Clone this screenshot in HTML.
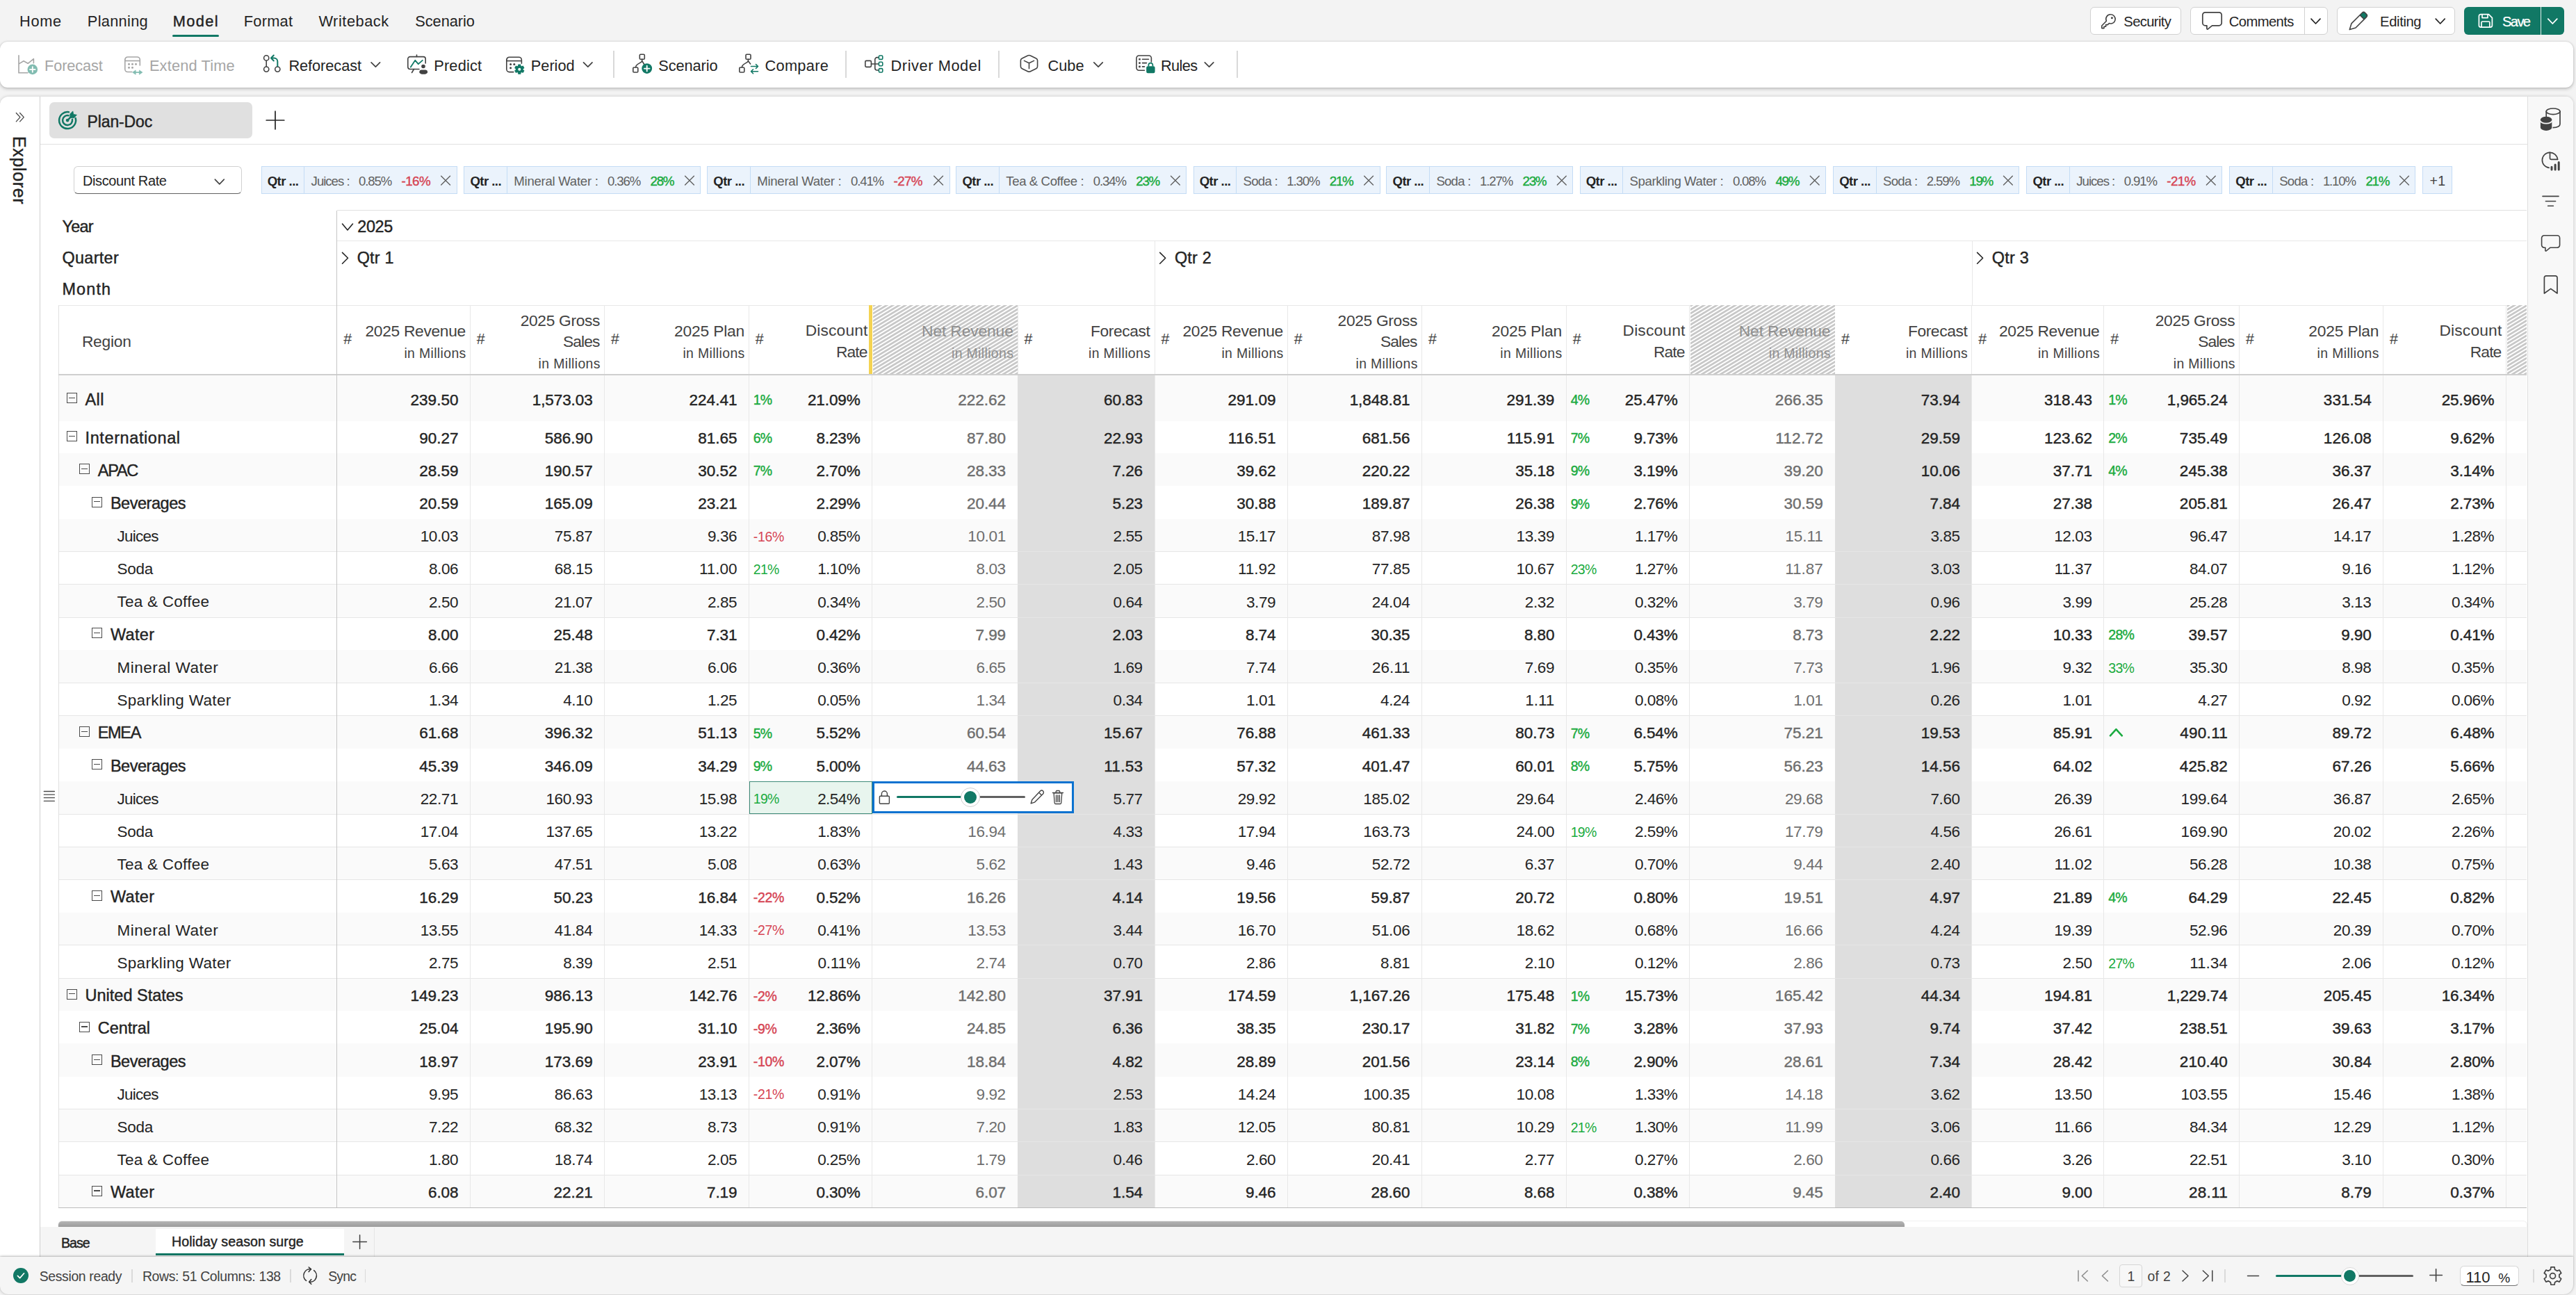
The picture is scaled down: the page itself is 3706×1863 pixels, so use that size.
<!DOCTYPE html><html><head><meta charset="utf-8"><title>Plan-Doc</title><style>

*{box-sizing:border-box;margin:0;padding:0}
html,body{width:3706px;height:1863px;overflow:hidden}
body{background:#f3f3f3;font-family:"Liberation Sans",sans-serif;color:#242424;position:relative}
.a{position:absolute}
.t{position:absolute;white-space:nowrap;line-height:1}
.sb{-webkit-text-stroke:0.42px currentColor}
svg{position:absolute;overflow:visible}
.nav{font-size:22.5px;top:20px;color:#242424}
.rib{font-size:24px;top:81px;color:#242424}
.rib.dis{color:#a3a3a3}
.btn{position:absolute;top:10px;height:40px;border:1px solid #d1d1d1;border-radius:6px;background:#fff}
.bt{position:absolute;white-space:nowrap;line-height:1;font-size:21px;top:19px;color:#242424}
.chip{position:absolute;top:239px;height:40px;background:#ebf3fc;border:1px solid #c2dcf7}
.chip i{position:absolute;top:0;bottom:0;left:61px;width:1px;background:#c2dcf7}
.ct{position:absolute;white-space:nowrap;line-height:1;font-size:19px;top:10px;color:#616161}
.ct.q{color:#242424;font-weight:bold;left:11px}
.ct.p{font-weight:bold}
.hl{position:absolute;height:1px;background:#e6e6e6}
.vl{position:absolute;width:1px;background:#e6e6e6}
.row{position:absolute;left:84px;width:3552px}
.c{position:absolute;white-space:nowrap;line-height:1;font-size:22.3px;text-align:right;color:#242424}
.c.g{color:#6e6e6e}
.d{position:absolute;white-space:nowrap;line-height:1;font-size:18.5px}
.lab{position:absolute;white-space:nowrap;line-height:1;font-size:22.3px;color:#242424}
.h1{position:absolute;white-space:nowrap;line-height:1;font-size:22.3px;color:#424242;text-align:right}
.h2{position:absolute;white-space:nowrap;line-height:1;font-size:19px;color:#424242;text-align:right}
.hash{position:absolute;white-space:nowrap;line-height:1;font-size:20px;color:#424242}
.pm{position:absolute;width:15px;height:15px;border:1.3px solid #4a4a4a}
.pm:after{content:"";position:absolute;left:2px;right:2px;top:5.5px;height:1.3px;background:#4a4a4a}

</style></head><body>
<div class="t" style="top:20.4px;font-size:21.8px;letter-spacing:0.69px;left:28.0px;">Home</div>
<div class="t" style="top:20.4px;font-size:21.8px;letter-spacing:0.29px;left:125.8px;">Planning</div>
<div class="t sb" style="top:20.4px;font-size:21.8px;letter-spacing:1.38px;left:248.7px;">Model</div>
<div class="t" style="top:20.4px;font-size:21.8px;letter-spacing:0.23px;left:350.8px;">Format</div>
<div class="t" style="top:20.4px;font-size:21.8px;letter-spacing:0.54px;left:458.4px;">Writeback</div>
<div class="t" style="top:20.4px;font-size:21.8px;letter-spacing:-0.07px;left:597.3px;">Scenario</div>
<div class="a" style="left:248px;top:50px;width:67px;height:3px;border-radius:2px;background:#117865"></div>
<div class="a" style="left:0;top:60px;width:3702.2px;height:65.8px;background:#fff;border-radius:11px;box-shadow:0 2px 5px rgba(0,0,0,.21),0 0 3px rgba(0,0,0,.13)"></div>
<div class="t" style="top:84.0px;font-size:21.8px;letter-spacing:-0.16px;left:64.1px;color:#a6a6a6;">Forecast</div>
<div class="t" style="top:84.0px;font-size:21.8px;letter-spacing:0.17px;left:214.9px;color:#a6a6a6;">Extend Time</div>
<div class="t" style="top:84.0px;font-size:21.8px;letter-spacing:-0.08px;left:415.4px;">Reforecast</div>
<div class="t" style="top:84.0px;font-size:21.8px;letter-spacing:0.18px;left:624.2px;">Predict</div>
<div class="t" style="top:84.0px;font-size:21.8px;letter-spacing:-0.04px;left:763.8px;">Period</div>
<div class="t" style="top:84.0px;font-size:21.8px;letter-spacing:-0.11px;left:947.3px;">Scenario</div>
<div class="t" style="top:84.0px;font-size:21.8px;letter-spacing:0.32px;left:1100.4px;">Compare</div>
<div class="t" style="top:84.0px;font-size:21.8px;letter-spacing:0.57px;left:1281.5px;">Driver Model</div>
<div class="t" style="top:84.0px;font-size:21.8px;letter-spacing:-0.05px;left:1507.6px;">Cube</div>
<div class="t" style="top:84.0px;font-size:21.8px;letter-spacing:-0.65px;left:1670.0px;">Rules</div>
<svg style="left:0;top:0" width="1" height="1"><path d="M534.1,89.8 L540.4,96.2 L546.6,89.8" fill="none" stroke="#424242" stroke-width="1.7" stroke-linecap="round" stroke-linejoin="round"/></svg>
<svg style="left:0;top:0" width="1" height="1"><path d="M839.5,89.8 L845.8,96.2 L852.0,89.8" fill="none" stroke="#424242" stroke-width="1.7" stroke-linecap="round" stroke-linejoin="round"/></svg>
<svg style="left:0;top:0" width="1" height="1"><path d="M1573.8,89.8 L1580.1,96.2 L1586.3,89.8" fill="none" stroke="#424242" stroke-width="1.7" stroke-linecap="round" stroke-linejoin="round"/></svg>
<svg style="left:0;top:0" width="1" height="1"><path d="M1733.3,89.8 L1739.6,96.2 L1745.8,89.8" fill="none" stroke="#424242" stroke-width="1.7" stroke-linecap="round" stroke-linejoin="round"/></svg>
<div class="a" style="left:882.2px;top:73px;width:1.6px;height:39px;background:#d9d9d9"></div>
<div class="a" style="left:1216.2px;top:73px;width:1.6px;height:39px;background:#d9d9d9"></div>
<div class="a" style="left:1436.2px;top:73px;width:1.6px;height:39px;background:#d9d9d9"></div>
<div class="a" style="left:1779.2px;top:73px;width:1.6px;height:39px;background:#d9d9d9"></div>
<svg style="left:25px;top:78px" width="31" height="30" viewBox="0 0 31 30"><path d="M2,1.7 V26.8 H15" fill="none" stroke="#a6a6a6" stroke-width="1.6" stroke-linecap="round"/><path d="M2.6,13.6 L9,9.8 L15.2,13.3 L23.4,6.7 V12.8" fill="none" stroke="#a6a6a6" stroke-width="1.6" stroke-linejoin="round" stroke-linecap="round"/><circle cx="21.8" cy="21.9" r="7.3" fill="#82bcb1"/><path d="M21.8,18.1 v7.6 M18,21.9 h7.6" stroke="#fff" stroke-width="1.8" stroke-linecap="round"/></svg>
<svg style="left:178px;top:80px" width="28" height="28" viewBox="0 0 28 28"><path d="M1.8,6 a4,4 0 0 1 4,-4 h13.5 a4,4 0 0 1 4,4 v8" fill="none" stroke="#a6a6a6" stroke-width="1.6" stroke-linecap="round"/><path d="M1.8,6 v13.5 a4,4 0 0 0 4,4 h6" fill="none" stroke="#a6a6a6" stroke-width="1.6" stroke-linecap="round"/><path d="M1.8,7.5 h21.5" stroke="#a6a6a6" stroke-width="1.6"/><g fill="#a6a6a6"><circle cx="7.5" cy="12.3" r="1.5"/><circle cx="12.5" cy="12.3" r="1.5"/><circle cx="17.5" cy="12.3" r="1.5"/><circle cx="7.5" cy="17.3" r="1.5"/><circle cx="12.5" cy="17.3" r="1.5"/></g><path d="M15,24.1 H25" stroke="#82bcb1" stroke-width="1.7"/><path d="M12.6,24.1 L17.2,20.9 V27.3 Z M27,24.1 L22.4,20.9 V27.3 Z" fill="#82bcb1" stroke="#82bcb1" stroke-width="0.6" stroke-linejoin="round"/></svg>
<svg style="left:378px;top:78px" width="28" height="28" viewBox="0 0 28 28"><circle cx="5.2" cy="5.4" r="3.6" fill="none" stroke="#424242" stroke-width="1.6"/><circle cx="5.2" cy="21.6" r="3.6" fill="none" stroke="#424242" stroke-width="1.6"/><circle cx="21.3" cy="21.6" r="3.6" fill="none" stroke="#424242" stroke-width="1.6"/><path d="M5.2,9 V18" stroke="#424242" stroke-width="1.6"/><path d="M21.3,18 V10.5 a5,5 0 0 0 -5,-5 H12.5" fill="none" stroke="#117865" stroke-width="2"/><path d="M15.8,1.5 L12,5.5 L15.8,9.5" fill="none" stroke="#117865" stroke-width="2" stroke-linecap="round" stroke-linejoin="round"/></svg>
<svg style="left:585px;top:78px" width="31" height="30" viewBox="0 0 31 30"><path d="M14.5,1 V3.5" stroke="#424242" stroke-width="1.6" stroke-linecap="round"/><path d="M18,21.5 H5 a3.2,3.2 0 0 1 -3.2,-3.2 V6.8 a3.2,3.2 0 0 1 3.2,-3.2 H24 a3.2,3.2 0 0 1 3.2,3.2 V13" fill="none" stroke="#424242" stroke-width="1.6" stroke-linecap="round"/><path d="M10.5,21.5 L7.5,26.5" stroke="#424242" stroke-width="1.6" stroke-linecap="round"/><path d="M5.8,18.6 L12.3,8.8 L16.8,14.2 L22.8,8.8" fill="none" stroke="#117865" stroke-width="1.8" stroke-linecap="round" stroke-linejoin="round"/><circle cx="24" cy="17.5" r="3.4" fill="#424242" stroke="#fff" stroke-width="1.2"/><path d="M18.2,25.2 a3,3 0 0 1 3,-2.6 h6 a3,3 0 0 1 3,2.6 c0,2.8 -3,3.6 -6,3.6 s-6,-0.8 -6,-3.6 z" fill="#424242"/></svg>
<svg style="left:727px;top:80px" width="29" height="28" viewBox="0 0 29 28"><path d="M1.8,6.2 a4,4 0 0 1 4,-4 h13.6 a4,4 0 0 1 4,4 v5" fill="none" stroke="#424242" stroke-width="1.6" stroke-linecap="round"/><path d="M1.8,6.2 v13.4 a4,4 0 0 0 4,4 h6" fill="none" stroke="#424242" stroke-width="1.6" stroke-linecap="round"/><path d="M1.8,7.6 h21.6" stroke="#424242" stroke-width="1.6"/><g fill="#424242"><circle cx="7.6" cy="12.6" r="1.5"/><circle cx="12.8" cy="12.6" r="1.5"/><circle cx="7.6" cy="17.8" r="1.5"/></g><g transform="translate(20.3,19.7) scale(0.93)"><path d="M1.73,5.01 L1.64,7.11 L-1.64,7.11 L-1.73,5.01 L-3.48,4.00 L-5.34,4.98 L-6.98,2.13 L-5.20,1.01 L-5.20,-1.01 L-6.98,-2.13 L-5.34,-4.98 L-3.48,-4.00 L-1.73,-5.01 L-1.64,-7.11 L1.64,-7.11 L1.73,-5.01 L3.48,-4.00 L5.34,-4.98 L6.98,-2.13 L5.20,-1.01 L5.20,1.01 L6.98,2.13 L5.34,4.98 L3.48,4.00 Z" fill="#117865" stroke="#117865" stroke-width="1.2" stroke-linejoin="round"/><circle r="2.2" fill="#fff"/></g></svg>
<svg style="left:909px;top:76px" width="31" height="32" viewBox="0 0 31 32"><rect x="11.3" y="2.3" width="7" height="7" rx="1.3" fill="none" stroke="#424242" stroke-width="1.6"/><rect x="1.8" y="21" width="7" height="7" rx="1.3" fill="none" stroke="#424242" stroke-width="1.6"/><path d="M14.7,9.4 V11.2 C14.7,15.2 6,14.6 5.6,20.6 M14.7,11.6 L17.6,16.2" fill="none" stroke="#424242" stroke-width="1.6" stroke-linecap="round"/><circle cx="21.7" cy="22.6" r="7.4" fill="#117865"/><path d="M21.7,18.8 v7.6 M17.9,22.6 h7.6" stroke="#fff" stroke-width="1.9" stroke-linecap="round"/></svg>
<svg style="left:1062px;top:76px" width="31" height="32" viewBox="0 0 31 32"><rect x="11" y="2.3" width="7" height="7" rx="1.3" fill="none" stroke="#424242" stroke-width="1.6"/><rect x="1.8" y="21" width="7" height="7" rx="1.3" fill="none" stroke="#424242" stroke-width="1.6"/><path d="M14.4,9.4 V11.2 C14.4,15.2 5.8,14.6 5.4,20.6 M14.4,11.6 L17.6,16" fill="none" stroke="#424242" stroke-width="1.6" stroke-linecap="round"/><path d="M18.5,19.5 H28.5 M25.5,16.5 l3,3 l-3,3" fill="none" stroke="#117865" stroke-width="1.6" stroke-linecap="round" stroke-linejoin="round"/><path d="M28.5,26.8 H18.5 M21.5,23.8 l-3,3 l3,3" fill="none" stroke="#117865" stroke-width="1.6" stroke-linecap="round" stroke-linejoin="round"/></svg>
<svg style="left:1243px;top:78px" width="30" height="29" viewBox="0 0 30 29"><rect x="1.8" y="9.4" width="8.6" height="9" rx="1.6" fill="none" stroke="#424242" stroke-width="1.6"/><path d="M10.4,14 H21 M21.5,4.6 H18.8 a3,3 0 0 0 -3,3 V20 a3,3 0 0 0 3,3 H21.5" fill="none" stroke="#424242" stroke-width="1.6"/><rect x="21.4" y="2" width="5.4" height="5.4" rx="1.4" fill="none" stroke="#117865" stroke-width="1.6"/><rect x="21.4" y="11.3" width="5.4" height="5.4" rx="1.4" fill="none" stroke="#117865" stroke-width="1.6"/><rect x="21.4" y="20.6" width="5.4" height="5.4" rx="1.4" fill="none" stroke="#117865" stroke-width="1.6"/></svg>
<svg style="left:1466px;top:78px" width="30" height="28" viewBox="0 0 30 28"><path d="M12.6,2 a4,4 0 0 1 3.8,0 l8.2,4 a3.4,3.4 0 0 1 2,3.1 V17.6 a3.4,3.4 0 0 1 -2,3.1 l-8.2,4 a4,4 0 0 1 -3.8,0 l-8.2,-4 a3.4,3.4 0 0 1 -2,-3.1 V9.1 a3.4,3.4 0 0 1 2,-3.1 z" fill="none" stroke="#424242" stroke-width="1.6" stroke-linejoin="round"/><path d="M7.5,9.4 L14.5,12.8 L21.5,9.4 M14.5,12.8 V20.6" fill="none" stroke="#424242" stroke-width="1.6" stroke-linecap="round" stroke-linejoin="round"/></svg>
<svg style="left:1633px;top:78px" width="30" height="29" viewBox="0 0 30 29"><path d="M13.5,23.2 H5.6 a3.6,3.6 0 0 1 -3.6,-3.6 V5.6 a3.6,3.6 0 0 1 3.6,-3.6 H19.8 a3.6,3.6 0 0 1 3.6,3.6 V11" fill="none" stroke="#424242" stroke-width="1.6" stroke-linecap="round"/><g fill="#424242"><rect x="5.2" y="6" width="2.6" height="2.6" rx=".6"/><rect x="5.2" y="11.3" width="2.6" height="2.6" rx=".6"/><rect x="5.2" y="16.6" width="2.6" height="2.6" rx=".6"/></g><path d="M10.5,7.3 H19.5 M10.5,12.6 H16.5 M10.5,17.9 H13.5" stroke="#424242" stroke-width="1.6" stroke-linecap="round"/><rect x="16.2" y="17.2" width="12.4" height="10" rx="2.2" fill="#117865"/><path d="M19.4,17.6 V15.6 a3,3 0 0 1 6,0 V17.6" fill="none" stroke="#117865" stroke-width="1.8"/></svg>
<div class="btn" style="left:3007px;width:131px"></div>
<div class="btn" style="left:3151px;width:198px"></div>
<div class="a" style="left:3315px;top:11px;width:1px;height:38px;background:#d1d1d1"></div>
<div class="btn" style="left:3362px;width:170px"></div>
<div class="a" style="left:3545px;top:10px;width:144px;height:40px;border-radius:6px;background:#117865"></div>
<div class="a" style="left:3654.6px;top:10px;width:1.3px;height:40px;background:rgba(255,255,255,.88)"></div>
<div class="t" style="top:20.7px;font-size:20.2px;letter-spacing:-0.61px;left:3055.3px;">Security</div>
<div class="t" style="top:20.7px;font-size:20.2px;letter-spacing:-0.57px;left:3206.8px;">Comments</div>
<div class="t" style="top:20.7px;font-size:20.2px;letter-spacing:-0.37px;left:3424.1px;">Editing</div>
<div class="t" style="top:20.7px;font-size:20.2px;letter-spacing:-1.64px;left:3600.0px;color:#fff;-webkit-text-stroke:0.25px #fff;">Save</div>
<svg style="left:0;top:0" width="1" height="1"><path d="M3325.0,27.2 L3331.5,34.0 L3338.0,27.2" fill="none" stroke="#242424" stroke-width="1.7" stroke-linecap="round" stroke-linejoin="round"/></svg>
<svg style="left:0;top:0" width="1" height="1"><path d="M3504.2,27.2 L3510.7,34.0 L3517.2,27.2" fill="none" stroke="#242424" stroke-width="1.7" stroke-linecap="round" stroke-linejoin="round"/></svg>
<svg style="left:0;top:0" width="1" height="1"><path d="M3665.8,27.2 L3672.3,34.0 L3678.8,27.2" fill="none" stroke="#fff" stroke-width="1.8" stroke-linecap="round" stroke-linejoin="round"/></svg>
<svg style="left:3022px;top:19px" width="25" height="24" viewBox="0 0 25 24"><path d="M14.6,1.8 a6.6,6.6 0 1 1 -2.3,12.8 L10.2,16.6 H7.6 V19.2 H5 V21.6 H1.8 V18 L8.4,11.2 A6.6,6.6 0 0 1 14.6,1.8 Z" fill="none" stroke="#424242" stroke-width="1.6" stroke-linejoin="round"/><circle cx="16.4" cy="6.8" r="1.5" fill="#424242"/></svg>
<svg style="left:3167px;top:16.2px" width="32" height="29" viewBox="0 0 32 29"><path d="M5.6,1.8 H25.4 a3.8,3.8 0 0 1 3.8,3.8 V17 a3.8,3.8 0 0 1 -3.8,3.8 H15.5 L9.4,25.8 a.9,.9 0 0 1 -1.5,-.7 V20.8 H5.6 a3.8,3.8 0 0 1 -3.8,-3.8 V5.6 a3.8,3.8 0 0 1 3.8,-3.8 Z" fill="none" stroke="#424242" stroke-width="1.7" stroke-linejoin="round"/></svg>
<svg style="left:0;top:0" width="1" height="1"><g transform="translate(3380.3,42.6) rotate(-45)"><path d="M25.299999999999997,-4.3 L29.799999999999997,-4.3 Q32.8,-4.3 32.8,-1.3 L32.8,1.3 Q32.8,4.3 29.799999999999997,4.3 L25.299999999999997,4.3 Z" fill="#117865"/><path d="M0,0 L8,-4.3 L29.799999999999997,-4.3 Q32.8,-4.3 32.8,-1.3 L32.8,1.3 Q32.8,4.3 29.799999999999997,4.3 L8,4.3 Z M25.299999999999997,-4.3 V4.3" fill="none" stroke="#424242" stroke-width="1.6" stroke-linejoin="round"/></g></svg>
<svg style="left:3565px;top:19px" width="23" height="22" viewBox="0 0 23 22"><path d="M4,1.6 H15.4 L20.4,6.6 V17.6 a2.6,2.6 0 0 1 -2.6,2.6 H4 a2.6,2.6 0 0 1 -2.6,-2.6 V4.2 A2.6,2.6 0 0 1 4,1.6 Z" fill="none" stroke="#fff" stroke-width="1.7" stroke-linejoin="round"/><path d="M6,1.8 V6.6 H14 V1.8 M5,20 V13.2 a1.2,1.2 0 0 1 1.2,-1.2 H15.6 a1.2,1.2 0 0 1 1.2,1.2 V20" fill="none" stroke="#fff" stroke-width="1.7" stroke-linejoin="round"/></svg>
<div class="a" style="left:0;top:138.8px;width:3702.2px;height:1669.2px;background:#fff;border-radius:12px 11px 0 0;box-shadow:0 0 4px rgba(0,0,0,.19)"></div>
<div class="a" style="left:3636px;top:138.8px;width:66.2px;height:1669.2px;background:#f8f8f8;border-left:1px solid #dedede;border-radius:0 11px 0 0"></div>
<div class="a" style="left:57.2px;top:139px;width:1px;height:1669px;background:#cfcfcf"></div>
<svg style="left:0;top:0" width="1" height="1"><path d="M23.3,162.5 L29,168.7 L23.3,174.9 M28.6,162.5 L34.3,168.7 L28.6,174.9" fill="none" stroke="#424242" stroke-width="1.25" stroke-linecap="round" stroke-linejoin="round"/></svg>
<div class="t sb" style="left:27px;top:195.8px;font-size:25px;letter-spacing:0.65px;transform-origin:0 0;transform:rotate(90deg) translate(0,-50%);color:#242424">Explorer</div>
<svg style="left:0;top:0" width="1" height="1"><path d="M63.3,1138.5 H78.4 M63.3,1143.2 H78.4 M63.3,1147.7 H78.4 M63.3,1152.3 H78.4" stroke="#4a4a4a" stroke-width="1.3" stroke-linecap="round"/></svg>
<svg style="left:0;top:0" width="1" height="1"><ellipse cx="3673.1" cy="160.3" rx="9.9" ry="4.3" fill="none" stroke="#424242" stroke-width="1.7"/><path d="M3663.2,160.3 V168 M3683,160.3 V178.6 C3683,181.6 3678.6,183.6 3672.4,183.7" fill="none" stroke="#424242" stroke-width="1.7" stroke-linecap="round"/><path d="M3654.9,172.3 V183.5 a8.2,4.4 0 0 0 16.4,0 V172.3 Z" fill="#424242" stroke="#f8f8f8" stroke-width="2.6"/><path d="M3654.9,172.3 V183.5 a8.2,4.4 0 0 0 16.4,0 V172.3 Z" fill="#424242"/><ellipse cx="3663.1" cy="173.7" rx="9" ry="4.9" fill="#f8f8f8"/><ellipse cx="3663.1" cy="172.3" rx="8.2" ry="4.5" fill="#424242"/></svg>
<svg style="left:0;top:0" width="1" height="1"><path d="M3667.15,241.42 A11.1,11.1 0 1 1 3679.54,229.24" fill="none" stroke="#424242" stroke-width="1.7" stroke-linecap="round"/><path d="M3668.5,219.4 V227.8 a1.6,1.6 0 0 0 1.6,1.6 H3679.4" fill="none" stroke="#424242" stroke-width="1.7" stroke-linecap="round"/><path d="M3671,240.3 V243.9 M3676.1,236.9 V243.9 M3681.2,233.5 V243.9" stroke="#424242" stroke-width="3" stroke-linecap="round"/></svg>
<svg style="left:3656px;top:280px" width="28" height="18" viewBox="0 0 28 18"><path d="M2,2.4 H25 M6.4,9.5 H20.6 M9.6,16.2 H17.4" stroke="#424242" stroke-width="1.6" stroke-linecap="round"/></svg>
<svg style="left:3655px;top:337px" width="30" height="27" viewBox="0 0 30 27"><path d="M5.2,1.8 H24 a3.6,3.6 0 0 1 3.6,3.6 V15.6 a3.6,3.6 0 0 1 -3.6,3.6 H14 L8.2,24 a.8,.8 0 0 1 -1.3,-.6 V19.2 H5.2 a3.6,3.6 0 0 1 -3.6,-3.6 V5.4 a3.6,3.6 0 0 1 3.6,-3.6 Z" fill="none" stroke="#424242" stroke-width="1.6" stroke-linejoin="round"/></svg>
<svg style="left:3658px;top:395px" width="24" height="30" viewBox="0 0 24 30"><path d="M2.4,4.4 a2.6,2.6 0 0 1 2.6,-2.6 H18.4 a2.6,2.6 0 0 1 2.6,2.6 V27 L11.7,20.4 L2.4,27 Z" fill="none" stroke="#424242" stroke-width="1.7" stroke-linejoin="round"/></svg>
<div class="a" style="left:71px;top:147px;width:291.5px;height:52px;background:#e0e0e0;border-radius:7px"></div>
<svg style="left:83px;top:159px" width="29" height="29" viewBox="0 0 29 29"><path d="M15.98,2.25 A12,12 0 1 0 25.71,11.08" fill="none" stroke="#117865" stroke-width="2.5" stroke-linecap="round"/><path d="M15.56,7.25 A7,7 0 1 0 20.99,12.88" fill="none" stroke="#117865" stroke-width="2.5" stroke-linecap="round"/><circle cx="14.1" cy="14.1" r="2.4" fill="#117865"/><path d="M14.1,14.1 L20,8.2" stroke="#117865" stroke-width="2.5" stroke-linecap="round"/><path d="M21.8,0.9 L22.7,5.5 L27.4,6.3 L23.4,10.6 H19 L17.8,9.2 V4.9 Z" fill="#117865" stroke="#117865" stroke-width="0.8" stroke-linejoin="round"/></svg>
<div class="t sb" style="top:163.5px;font-size:23px;letter-spacing:-0.12px;left:125.5px;">Plan-Doc</div>
<svg style="left:382px;top:159px" width="28" height="28" viewBox="0 0 28 28"><path d="M14,1.2 V26.8 M1.2,14 H26.8" stroke="#242424" stroke-width="1.7" stroke-linecap="round"/></svg>
<div class="hl" style="left:58px;top:207px;width:3578px;background:#e0e0e0"></div>
<div class="a" style="left:106px;top:239.2px;width:241.5px;height:39.8px;border:1px solid #d1d1d1;border-bottom:1.6px solid #616161;border-radius:6px;background:#fff"></div>
<div class="t" style="top:249.9px;font-size:20px;letter-spacing:-0.39px;left:119.0px;color:#242424;">Discount Rate</div>
<svg style="left:0;top:0" width="1" height="1"><path d="M309.3,258.1 L315.8,264.9 L322.3,258.1" fill="none" stroke="#424242" stroke-width="1.6" stroke-linecap="round" stroke-linejoin="round"/></svg>
<div class="a" style="left:375.5px;top:239px;width:282.1px;height:40px;background:#ebf3fc;border:1px solid #c4dcf5"></div>
<div class="a" style="left:437.3px;top:240px;width:1px;height:38px;background:#c4dcf5"></div>
<div class="t" style="top:251.9px;font-size:18.6px;letter-spacing:-0.55px;left:384.7px;color:#242424;font-weight:bold;">Qtr ...</div>
<div class="t" style="top:251.9px;font-size:18.6px;letter-spacing:-1.01px;left:447.6px;color:#616161;">Juices :</div>
<div class="t" style="top:251.9px;font-size:18.6px;letter-spacing:-1.15px;left:516.1px;color:#616161;">0.85%</div>
<div class="t sb" style="top:251.7px;font-size:18.8px;letter-spacing:-0.62px;left:577.6px;color:#d64554;">-16%</div>
<svg style="left:0;top:0" width="1" height="1"><path d="M634.7,253.3 L647.5,266.1 M647.5,253.3 L634.7,266.1" stroke="#616161" stroke-width="1.4" stroke-linecap="round"/></svg>
<div class="a" style="left:667.2px;top:239px;width:341.3px;height:40px;background:#ebf3fc;border:1px solid #c4dcf5"></div>
<div class="a" style="left:729.0px;top:240px;width:1px;height:38px;background:#c4dcf5"></div>
<div class="t" style="top:251.9px;font-size:18.6px;letter-spacing:-0.55px;left:676.4px;color:#242424;font-weight:bold;">Qtr ...</div>
<div class="t" style="top:251.9px;font-size:18.6px;letter-spacing:-0.27px;left:739.3px;color:#616161;">Mineral Water :</div>
<div class="t" style="top:251.9px;font-size:18.6px;letter-spacing:-1.15px;left:874.1px;color:#616161;">0.36%</div>
<div class="t sb" style="top:251.7px;font-size:18.8px;letter-spacing:-1.31px;left:935.6px;color:#1aab40;">28%</div>
<svg style="left:0;top:0" width="1" height="1"><path d="M985.6,253.3 L998.4,266.1 M998.4,253.3 L985.6,266.1" stroke="#616161" stroke-width="1.4" stroke-linecap="round"/></svg>
<div class="a" style="left:1017.1px;top:239px;width:349.5px;height:40px;background:#ebf3fc;border:1px solid #c4dcf5"></div>
<div class="a" style="left:1078.9px;top:240px;width:1px;height:38px;background:#c4dcf5"></div>
<div class="t" style="top:251.9px;font-size:18.6px;letter-spacing:-0.55px;left:1026.3px;color:#242424;font-weight:bold;">Qtr ...</div>
<div class="t" style="top:251.9px;font-size:18.6px;letter-spacing:-0.27px;left:1089.2px;color:#616161;">Mineral Water :</div>
<div class="t" style="top:251.9px;font-size:18.6px;letter-spacing:-1.15px;left:1224.0px;color:#616161;">0.41%</div>
<div class="t sb" style="top:251.7px;font-size:18.8px;letter-spacing:-0.62px;left:1285.5px;color:#d64554;">-27%</div>
<svg style="left:0;top:0" width="1" height="1"><path d="M1343.7,253.3 L1356.5,266.1 M1356.5,253.3 L1343.7,266.1" stroke="#616161" stroke-width="1.4" stroke-linecap="round"/></svg>
<div class="a" style="left:1375.2px;top:239px;width:332.2px;height:40px;background:#ebf3fc;border:1px solid #c4dcf5"></div>
<div class="a" style="left:1437.0px;top:240px;width:1px;height:38px;background:#c4dcf5"></div>
<div class="t" style="top:251.9px;font-size:18.6px;letter-spacing:-0.55px;left:1384.4px;color:#242424;font-weight:bold;">Qtr ...</div>
<div class="t" style="top:251.9px;font-size:18.6px;letter-spacing:-0.40px;left:1447.3px;color:#616161;">Tea &amp; Coffee :</div>
<div class="t" style="top:251.9px;font-size:18.6px;letter-spacing:-1.15px;left:1572.8px;color:#616161;">0.34%</div>
<div class="t sb" style="top:251.7px;font-size:18.8px;letter-spacing:-1.31px;left:1634.3px;color:#1aab40;">23%</div>
<svg style="left:0;top:0" width="1" height="1"><path d="M1684.5,253.3 L1697.3,266.1 M1697.3,253.3 L1684.5,266.1" stroke="#616161" stroke-width="1.4" stroke-linecap="round"/></svg>
<div class="a" style="left:1716.5px;top:239px;width:269.1px;height:40px;background:#ebf3fc;border:1px solid #c4dcf5"></div>
<div class="a" style="left:1778.3px;top:240px;width:1px;height:38px;background:#c4dcf5"></div>
<div class="t" style="top:251.9px;font-size:18.6px;letter-spacing:-0.55px;left:1725.7px;color:#242424;font-weight:bold;">Qtr ...</div>
<div class="t" style="top:251.9px;font-size:18.6px;letter-spacing:-0.76px;left:1788.6px;color:#616161;">Soda :</div>
<div class="t" style="top:251.9px;font-size:18.6px;letter-spacing:-1.15px;left:1851.3px;color:#616161;">1.30%</div>
<div class="t sb" style="top:251.7px;font-size:18.8px;letter-spacing:-1.31px;left:1912.8px;color:#1aab40;">21%</div>
<svg style="left:0;top:0" width="1" height="1"><path d="M1962.7,253.3 L1975.5,266.1 M1975.5,253.3 L1962.7,266.1" stroke="#616161" stroke-width="1.4" stroke-linecap="round"/></svg>
<div class="a" style="left:1994.3px;top:239px;width:269.0px;height:40px;background:#ebf3fc;border:1px solid #c4dcf5"></div>
<div class="a" style="left:2056.1px;top:240px;width:1px;height:38px;background:#c4dcf5"></div>
<div class="t" style="top:251.9px;font-size:18.6px;letter-spacing:-0.55px;left:2003.5px;color:#242424;font-weight:bold;">Qtr ...</div>
<div class="t" style="top:251.9px;font-size:18.6px;letter-spacing:-0.76px;left:2066.4px;color:#616161;">Soda :</div>
<div class="t" style="top:251.9px;font-size:18.6px;letter-spacing:-1.15px;left:2129.1px;color:#616161;">1.27%</div>
<div class="t sb" style="top:251.7px;font-size:18.8px;letter-spacing:-1.31px;left:2190.6px;color:#1aab40;">23%</div>
<svg style="left:0;top:0" width="1" height="1"><path d="M2240.4,253.3 L2253.2,266.1 M2253.2,253.3 L2240.4,266.1" stroke="#616161" stroke-width="1.4" stroke-linecap="round"/></svg>
<div class="a" style="left:2272.5px;top:239px;width:354.7px;height:40px;background:#ebf3fc;border:1px solid #c4dcf5"></div>
<div class="a" style="left:2334.3px;top:240px;width:1px;height:38px;background:#c4dcf5"></div>
<div class="t" style="top:251.9px;font-size:18.6px;letter-spacing:-0.55px;left:2281.7px;color:#242424;font-weight:bold;">Qtr ...</div>
<div class="t" style="top:251.9px;font-size:18.6px;letter-spacing:-0.42px;left:2344.6px;color:#616161;">Sparkling Water :</div>
<div class="t" style="top:251.9px;font-size:18.6px;letter-spacing:-1.15px;left:2492.9px;color:#616161;">0.08%</div>
<div class="t sb" style="top:251.7px;font-size:18.8px;letter-spacing:-1.31px;left:2554.4px;color:#1aab40;">49%</div>
<svg style="left:0;top:0" width="1" height="1"><path d="M2604.3,253.3 L2617.1,266.1 M2617.1,253.3 L2604.3,266.1" stroke="#616161" stroke-width="1.4" stroke-linecap="round"/></svg>
<div class="a" style="left:2637px;top:239px;width:268.4px;height:40px;background:#ebf3fc;border:1px solid #c4dcf5"></div>
<div class="a" style="left:2698.8px;top:240px;width:1px;height:38px;background:#c4dcf5"></div>
<div class="t" style="top:251.9px;font-size:18.6px;letter-spacing:-0.55px;left:2646.2px;color:#242424;font-weight:bold;">Qtr ...</div>
<div class="t" style="top:251.9px;font-size:18.6px;letter-spacing:-0.76px;left:2709.1px;color:#616161;">Soda :</div>
<div class="t" style="top:251.9px;font-size:18.6px;letter-spacing:-1.15px;left:2771.8px;color:#616161;">2.59%</div>
<div class="t sb" style="top:251.7px;font-size:18.8px;letter-spacing:-1.31px;left:2833.3px;color:#1aab40;">19%</div>
<svg style="left:0;top:0" width="1" height="1"><path d="M2882.5,253.3 L2895.3,266.1 M2895.3,253.3 L2882.5,266.1" stroke="#616161" stroke-width="1.4" stroke-linecap="round"/></svg>
<div class="a" style="left:2915.2px;top:239px;width:282.1px;height:40px;background:#ebf3fc;border:1px solid #c4dcf5"></div>
<div class="a" style="left:2977.0px;top:240px;width:1px;height:38px;background:#c4dcf5"></div>
<div class="t" style="top:251.9px;font-size:18.6px;letter-spacing:-0.55px;left:2924.4px;color:#242424;font-weight:bold;">Qtr ...</div>
<div class="t" style="top:251.9px;font-size:18.6px;letter-spacing:-1.01px;left:2987.3px;color:#616161;">Juices :</div>
<div class="t" style="top:251.9px;font-size:18.6px;letter-spacing:-1.15px;left:3055.8px;color:#616161;">0.91%</div>
<div class="t sb" style="top:251.7px;font-size:18.8px;letter-spacing:-0.62px;left:3117.3px;color:#d64554;">-21%</div>
<svg style="left:0;top:0" width="1" height="1"><path d="M3174.4,253.3 L3187.2,266.1 M3187.2,253.3 L3174.4,266.1" stroke="#616161" stroke-width="1.4" stroke-linecap="round"/></svg>
<div class="a" style="left:3207.1px;top:239px;width:268.4px;height:40px;background:#ebf3fc;border:1px solid #c4dcf5"></div>
<div class="a" style="left:3268.9px;top:240px;width:1px;height:38px;background:#c4dcf5"></div>
<div class="t" style="top:251.9px;font-size:18.6px;letter-spacing:-0.55px;left:3216.3px;color:#242424;font-weight:bold;">Qtr ...</div>
<div class="t" style="top:251.9px;font-size:18.6px;letter-spacing:-0.76px;left:3279.2px;color:#616161;">Soda :</div>
<div class="t" style="top:251.9px;font-size:18.6px;letter-spacing:-1.15px;left:3341.9px;color:#616161;">1.10%</div>
<div class="t sb" style="top:251.7px;font-size:18.8px;letter-spacing:-1.31px;left:3403.4px;color:#1aab40;">21%</div>
<svg style="left:0;top:0" width="1" height="1"><path d="M3452.6,253.3 L3465.4,266.1 M3465.4,253.3 L3452.6,266.1" stroke="#616161" stroke-width="1.4" stroke-linecap="round"/></svg>
<div class="a" style="left:3485.3px;top:239px;width:42.3px;height:40px;background:#ebf3fc;border:1px solid #c4dcf5"></div>
<div class="t" style="top:251.1px;font-size:19.5px;letter-spacing:0.38px;left:3495.5px;color:#424242;">+1</div>
<div class="t sb" style="top:314.5px;font-size:23.4px;letter-spacing:-0.77px;left:89.5px;">Year</div>
<div class="t sb" style="top:359.7px;font-size:23.4px;letter-spacing:0.32px;left:89.5px;">Quarter</div>
<div class="t sb" style="top:405.4px;font-size:23.4px;letter-spacing:1.13px;left:89.5px;">Month</div>
<svg style="left:0;top:0" width="1" height="1"><path d="M492.5,322.0 L500.0,331.0 L507.5,322.0" fill="none" stroke="#242424" stroke-width="1.6" stroke-linecap="round" stroke-linejoin="round"/></svg>
<div class="t sb" style="top:314.5px;font-size:23.4px;letter-spacing:-0.31px;left:514.2px;">2025</div>
<svg style="left:0;top:0" width="1" height="1"><path d="M492.5,363.4 L500.5,371.3 L492.5,379.2" fill="none" stroke="#242424" stroke-width="1.6" stroke-linecap="round" stroke-linejoin="round"/></svg>
<div class="t sb" style="top:359.7px;font-size:23.4px;letter-spacing:0.22px;left:513.7px;">Qtr 1</div>
<svg style="left:0;top:0" width="1" height="1"><path d="M1668.7,363.4 L1676.7,371.3 L1668.7,379.2" fill="none" stroke="#242424" stroke-width="1.6" stroke-linecap="round" stroke-linejoin="round"/></svg>
<div class="t sb" style="top:359.7px;font-size:23.4px;letter-spacing:0.22px;left:1689.9px;">Qtr 2</div>
<svg style="left:0;top:0" width="1" height="1"><path d="M2844.6,363.4 L2852.6,371.3 L2844.6,379.2" fill="none" stroke="#242424" stroke-width="1.6" stroke-linecap="round" stroke-linejoin="round"/></svg>
<div class="t sb" style="top:359.7px;font-size:23.4px;letter-spacing:0.22px;left:2865.8px;">Qtr 3</div>
<div class="hl" style="left:484.9px;top:302px;width:3150.1px;background:#e0e0e0"></div>
<div class="hl" style="left:484.9px;top:346px;width:3150.1px;background:#e8e8e8"></div>
<div class="hl" style="left:84.0px;top:438.5px;width:3551.0px;background:#e8e8e8"></div>
<div class="vl" style="left:1660.6px;top:346px;height:93px;background:#e8e8e8"></div>
<div class="vl" style="left:2836.5px;top:346px;height:93px;background:#e8e8e8"></div>
<div class="a" style="left:84.0px;top:540px;width:3551.0px;height:66px;background:#fafafa"></div>
<div class="a" style="left:84.0px;top:652px;width:3551.0px;height:47px;background:#fafafa"></div>
<div class="a" style="left:84.0px;top:747px;width:3551.0px;height:47px;background:#fafafa"></div>
<div class="a" style="left:84.0px;top:841px;width:3551.0px;height:47px;background:#fafafa"></div>
<div class="a" style="left:84.0px;top:935px;width:3551.0px;height:47px;background:#fafafa"></div>
<div class="a" style="left:84.0px;top:1030px;width:3551.0px;height:47px;background:#fafafa"></div>
<div class="a" style="left:84.0px;top:1124px;width:3551.0px;height:47px;background:#fafafa"></div>
<div class="a" style="left:84.0px;top:1218px;width:3551.0px;height:48px;background:#fafafa"></div>
<div class="a" style="left:84.0px;top:1313px;width:3551.0px;height:47px;background:#fafafa"></div>
<div class="a" style="left:84.0px;top:1407px;width:3551.0px;height:47px;background:#fafafa"></div>
<div class="a" style="left:84.0px;top:1501px;width:3551.0px;height:48px;background:#fafafa"></div>
<div class="a" style="left:84.0px;top:1596px;width:3551.0px;height:47px;background:#fafafa"></div>
<div class="a" style="left:84.0px;top:1690px;width:3551.0px;height:47px;background:#fafafa"></div>
<div class="a" style="left:1464.1px;top:540.0px;width:197.0px;height:1197.2px;background:#dedede"></div>
<div class="a" style="left:2639.8px;top:540.0px;width:197.2px;height:1197.2px;background:#dedede"></div>
<div class="hl" style="left:84.0px;top:793px;width:3551.0px;height:1px;background:#e6e6e6"></div>
<div class="hl" style="left:84.0px;top:840px;width:3551.0px;height:1px;background:#e6e6e6"></div>
<div class="hl" style="left:84.0px;top:888px;width:3551.0px;height:1px;background:#e6e6e6"></div>
<div class="hl" style="left:84.0px;top:982px;width:3551.0px;height:1px;background:#e6e6e6"></div>
<div class="hl" style="left:84.0px;top:1029px;width:3551.0px;height:1px;background:#e6e6e6"></div>
<div class="hl" style="left:84.0px;top:1171px;width:3551.0px;height:1px;background:#e6e6e6"></div>
<div class="hl" style="left:84.0px;top:1218px;width:3551.0px;height:1px;background:#e6e6e6"></div>
<div class="hl" style="left:84.0px;top:1265px;width:3551.0px;height:1px;background:#e6e6e6"></div>
<div class="hl" style="left:84.0px;top:1359px;width:3551.0px;height:1px;background:#e6e6e6"></div>
<div class="hl" style="left:84.0px;top:1407px;width:3551.0px;height:1px;background:#e6e6e6"></div>
<div class="hl" style="left:84.0px;top:1595px;width:3551.0px;height:1px;background:#e6e6e6"></div>
<div class="hl" style="left:84.0px;top:1642px;width:3551.0px;height:1px;background:#e6e6e6"></div>
<div class="hl" style="left:84.0px;top:1690px;width:3551.0px;height:1px;background:#e6e6e6"></div>
<div class="vl" style="left:83.5px;top:439px;height:1298.2px;background:#e0e0e0"></div>
<div class="vl" style="left:676px;top:439px;height:1298.2px;background:#e8e8e8"></div>
<div class="vl" style="left:869px;top:439px;height:1298.2px;background:#e8e8e8"></div>
<div class="vl" style="left:1077px;top:439px;height:1298.2px;background:#e8e8e8"></div>
<div class="vl" style="left:1254px;top:439px;height:1298.2px;background:#e8e8e8"></div>
<div class="vl" style="left:1464px;top:439px;height:100px;background:#e8e8e8"></div>
<div class="vl" style="left:1661px;top:439px;height:1298.2px;background:#e8e8e8"></div>
<div class="vl" style="left:1852px;top:439px;height:1298.2px;background:#e8e8e8"></div>
<div class="vl" style="left:2045px;top:439px;height:1298.2px;background:#e8e8e8"></div>
<div class="vl" style="left:2253px;top:439px;height:1298.2px;background:#e8e8e8"></div>
<div class="vl" style="left:2430px;top:439px;height:1298.2px;background:#e8e8e8"></div>
<div class="vl" style="left:2639px;top:439px;height:100px;background:#e8e8e8"></div>
<div class="vl" style="left:2836px;top:439px;height:1298.2px;background:#e8e8e8"></div>
<div class="vl" style="left:3026px;top:439px;height:1298.2px;background:#e8e8e8"></div>
<div class="vl" style="left:3221px;top:439px;height:1298.2px;background:#e8e8e8"></div>
<div class="vl" style="left:3428px;top:439px;height:1298.2px;background:#e8e8e8"></div>
<div class="vl" style="left:3605px;top:439px;height:1298.2px;background:#e8e8e8"></div>
<div class="t" style="top:478.2px;font-size:21.4px;left:494.2px;color:#424242;">#</div>
<div class="t" style="top:464.5px;font-size:22.8px;letter-spacing:-0.32px;right:3036.1px;color:#424242;">2025 Revenue</div>
<div class="t" style="top:498.6px;font-size:19.4px;letter-spacing:0.37px;right:3035.4px;color:#424242;">in Millions</div>
<div class="t" style="top:478.2px;font-size:21.4px;left:685.8px;color:#424242;">#</div>
<div class="t" style="top:449.9px;font-size:22.8px;letter-spacing:-0.34px;right:2842.9px;color:#424242;">2025 Gross</div>
<div class="t" style="top:480.4px;font-size:22.8px;letter-spacing:-0.91px;right:2843.5px;color:#424242;">Sales</div>
<div class="t" style="top:513.8px;font-size:19.4px;letter-spacing:0.37px;right:2842.2px;color:#424242;">in Millions</div>
<div class="t" style="top:478.2px;font-size:21.4px;left:879.0px;color:#424242;">#</div>
<div class="t" style="top:464.5px;font-size:22.8px;letter-spacing:-0.19px;right:2635.0px;color:#424242;">2025 Plan</div>
<div class="t" style="top:498.6px;font-size:19.4px;letter-spacing:0.37px;right:2634.4px;color:#424242;">in Millions</div>
<div class="t" style="top:478.2px;font-size:21.4px;left:1086.8px;color:#424242;">#</div>
<div class="t" style="top:463.6px;font-size:22.8px;letter-spacing:0.16px;right:2457.4px;color:#424242;">Discount</div>
<div class="t" style="top:494.6px;font-size:22.8px;letter-spacing:-0.92px;right:2458.5px;color:#424242;">Rate</div>
<div class="a" style="left:1256.2px;top:439px;width:207.8px;height:99px;background:repeating-linear-gradient(149deg,#c8c8c8 0,#c8c8c8 1.95px,#fff 2.75px,#fff 3.85px,#c8c8c8 4.63px)"></div>
<div class="t" style="top:464.5px;font-size:22.8px;letter-spacing:-0.13px;right:2248.3px;color:#8f8f8f;">Net Revenue</div>
<div class="t" style="top:498.6px;font-size:19.4px;letter-spacing:0.37px;right:2247.8px;color:#8f8f8f;">in Millions</div>
<div class="t" style="top:478.2px;font-size:21.4px;left:1473.4px;color:#424242;">#</div>
<div class="t" style="top:464.5px;font-size:22.8px;letter-spacing:-0.41px;right:2051.6px;color:#424242;">Forecast</div>
<div class="t" style="top:498.6px;font-size:19.4px;letter-spacing:0.37px;right:2050.8px;color:#424242;">in Millions</div>
<div class="t" style="top:478.2px;font-size:21.4px;left:1670.4px;color:#424242;">#</div>
<div class="t" style="top:464.5px;font-size:22.8px;letter-spacing:-0.32px;right:1860.1px;color:#424242;">2025 Revenue</div>
<div class="t" style="top:498.6px;font-size:19.4px;letter-spacing:0.37px;right:1859.4px;color:#424242;">in Millions</div>
<div class="t" style="top:478.2px;font-size:21.4px;left:1861.8px;color:#424242;">#</div>
<div class="t" style="top:449.9px;font-size:22.8px;letter-spacing:-0.34px;right:1667.0px;color:#424242;">2025 Gross</div>
<div class="t" style="top:480.4px;font-size:22.8px;letter-spacing:-0.91px;right:1667.6px;color:#424242;">Sales</div>
<div class="t" style="top:513.8px;font-size:19.4px;letter-spacing:0.37px;right:1666.3px;color:#424242;">in Millions</div>
<div class="t" style="top:478.2px;font-size:21.4px;left:2054.9px;color:#424242;">#</div>
<div class="t" style="top:464.5px;font-size:22.8px;letter-spacing:-0.19px;right:1459.1px;color:#424242;">2025 Plan</div>
<div class="t" style="top:498.6px;font-size:19.4px;letter-spacing:0.37px;right:1458.5px;color:#424242;">in Millions</div>
<div class="t" style="top:478.2px;font-size:21.4px;left:2262.7px;color:#424242;">#</div>
<div class="t" style="top:463.6px;font-size:22.8px;letter-spacing:0.16px;right:1281.5px;color:#424242;">Discount</div>
<div class="t" style="top:494.6px;font-size:22.8px;letter-spacing:-0.92px;right:1282.6px;color:#424242;">Rate</div>
<div class="a" style="left:2432.2px;top:439px;width:207.7px;height:99px;background:repeating-linear-gradient(149deg,#c8c8c8 0,#c8c8c8 1.95px,#fff 2.75px,#fff 3.85px,#c8c8c8 4.63px)"></div>
<div class="t" style="top:464.5px;font-size:22.8px;letter-spacing:-0.13px;right:1072.6px;color:#8f8f8f;">Net Revenue</div>
<div class="t" style="top:498.6px;font-size:19.4px;letter-spacing:0.37px;right:1072.1px;color:#8f8f8f;">in Millions</div>
<div class="t" style="top:478.2px;font-size:21.4px;left:2649.1px;color:#424242;">#</div>
<div class="t" style="top:464.5px;font-size:22.8px;letter-spacing:-0.41px;right:875.7px;color:#424242;">Forecast</div>
<div class="t" style="top:498.6px;font-size:19.4px;letter-spacing:0.37px;right:874.9px;color:#424242;">in Millions</div>
<div class="t" style="top:478.2px;font-size:21.4px;left:2846.3px;color:#424242;">#</div>
<div class="t" style="top:464.5px;font-size:22.8px;letter-spacing:-0.32px;right:685.6px;color:#424242;">2025 Revenue</div>
<div class="t" style="top:498.6px;font-size:19.4px;letter-spacing:0.37px;right:684.9px;color:#424242;">in Millions</div>
<div class="t" style="top:478.2px;font-size:21.4px;left:3036.3px;color:#424242;">#</div>
<div class="t" style="top:449.9px;font-size:22.8px;letter-spacing:-0.34px;right:490.8px;color:#424242;">2025 Gross</div>
<div class="t" style="top:480.4px;font-size:22.8px;letter-spacing:-0.91px;right:491.4px;color:#424242;">Sales</div>
<div class="t" style="top:513.8px;font-size:19.4px;letter-spacing:0.37px;right:490.1px;color:#424242;">in Millions</div>
<div class="t" style="top:478.2px;font-size:21.4px;left:3231.1px;color:#424242;">#</div>
<div class="t" style="top:464.5px;font-size:22.8px;letter-spacing:-0.19px;right:283.7px;color:#424242;">2025 Plan</div>
<div class="t" style="top:498.6px;font-size:19.4px;letter-spacing:0.37px;right:283.2px;color:#424242;">in Millions</div>
<div class="t" style="top:478.2px;font-size:21.4px;left:3438.1px;color:#424242;">#</div>
<div class="t" style="top:463.6px;font-size:22.8px;letter-spacing:0.16px;right:106.6px;color:#424242;">Discount</div>
<div class="t" style="top:494.6px;font-size:22.8px;letter-spacing:-0.92px;right:107.7px;color:#424242;">Rate</div>
<div class="a" style="left:3607.0px;top:439px;width:28.0px;height:99px;background:repeating-linear-gradient(149deg,#c8c8c8 0,#c8c8c8 1.95px,#fff 2.75px,#fff 3.85px,#c8c8c8 4.63px)"></div>
<div class="a" style="left:1250.0px;top:439px;width:4.9px;height:99.5px;background:#f4d352"></div>
<div class="t" style="top:479.8px;font-size:22.8px;letter-spacing:-0.23px;left:117.9px;color:#424242;">Region</div>
<div class="a" style="left:84.0px;top:538px;width:3551.0px;height:2px;background:#cfcfcf"></div>
<div class="a" style="left:484.29999999999995px;top:302.5px;width:1.2px;height:1434.7px;background:#c6c6c6"></div>
<div class="a" style="left:84.0px;top:1736.5px;width:3551.0px;height:1.3px;background:#bcbcbc"></div>
<div class="pm" style="left:96.0px;top:565.1px"></div>
<div class="t sb" style="top:563.5px;font-size:23.5px;letter-spacing:0.33px;left:122.6px;">All</div>
<div class="t sb" style="top:564.6px;font-size:22.5px;letter-spacing:0.02px;right:3046.5px;color:#242424;">239.50</div>
<div class="t sb" style="top:564.6px;font-size:22.5px;letter-spacing:-0.09px;right:2853.4px;color:#242424;">1,573.03</div>
<div class="t sb" style="top:564.6px;font-size:22.5px;letter-spacing:0.02px;right:2645.5px;color:#242424;">224.41</div>
<div class="t sb" style="top:564.6px;font-size:22.5px;letter-spacing:-0.09px;right:2468.3px;color:#242424;">21.09%</div>
<div class="t sb" style="top:566.1px;font-size:19.5px;letter-spacing:-0.89px;left:1083.8px;color:#1aab40;">1%</div>
<div class="t sb" style="top:564.6px;font-size:22.5px;letter-spacing:0.02px;right:2258.9px;color:#6e6e6e;">222.62</div>
<div class="t sb" style="top:564.6px;font-size:22.5px;letter-spacing:-0.02px;right:2061.9px;color:#242424;">60.83</div>
<div class="t sb" style="top:564.6px;font-size:22.5px;letter-spacing:0.02px;right:1870.5px;color:#242424;">291.09</div>
<div class="t sb" style="top:564.6px;font-size:22.5px;letter-spacing:-0.09px;right:1677.5px;color:#242424;">1,848.81</div>
<div class="t sb" style="top:564.6px;font-size:22.5px;letter-spacing:0.02px;right:1469.6px;color:#242424;">291.39</div>
<div class="t sb" style="top:564.6px;font-size:22.5px;letter-spacing:-0.09px;right:1292.4px;color:#242424;">25.47%</div>
<div class="t sb" style="top:566.1px;font-size:19.5px;letter-spacing:-0.89px;left:2259.7px;color:#1aab40;">4%</div>
<div class="t sb" style="top:564.6px;font-size:22.5px;letter-spacing:0.02px;right:1083.2px;color:#6e6e6e;">266.35</div>
<div class="t sb" style="top:564.6px;font-size:22.5px;letter-spacing:-0.02px;right:886.0px;color:#242424;">73.94</div>
<div class="t sb" style="top:564.6px;font-size:22.5px;letter-spacing:0.02px;right:696.0px;color:#242424;">318.43</div>
<div class="t sb" style="top:564.6px;font-size:22.5px;letter-spacing:-0.09px;right:501.3px;color:#242424;">1,965.24</div>
<div class="t sb" style="top:566.1px;font-size:19.5px;letter-spacing:-0.89px;left:3033.3px;color:#1aab40;">1%</div>
<div class="t sb" style="top:564.6px;font-size:22.5px;letter-spacing:0.02px;right:294.2px;color:#242424;">331.54</div>
<div class="t sb" style="top:564.6px;font-size:22.5px;letter-spacing:-0.09px;right:117.6px;color:#242424;">25.96%</div>
<div class="pm" style="left:96.0px;top:620.1px"></div>
<div class="t sb" style="top:618.5px;font-size:23.5px;letter-spacing:0.59px;left:122.6px;">International</div>
<div class="t sb" style="top:619.6px;font-size:22.5px;letter-spacing:-0.02px;right:3046.5px;color:#242424;">90.27</div>
<div class="t sb" style="top:619.6px;font-size:22.5px;letter-spacing:0.02px;right:2853.3px;color:#242424;">586.90</div>
<div class="t sb" style="top:619.6px;font-size:22.5px;letter-spacing:-0.02px;right:2645.5px;color:#242424;">81.65</div>
<div class="t sb" style="top:619.6px;font-size:22.5px;letter-spacing:-0.15px;right:2468.4px;color:#242424;">8.23%</div>
<div class="t sb" style="top:621.1px;font-size:19.5px;letter-spacing:-0.89px;left:1083.8px;color:#1aab40;">6%</div>
<div class="t sb" style="top:619.6px;font-size:22.5px;letter-spacing:-0.02px;right:2258.9px;color:#6e6e6e;">87.80</div>
<div class="t sb" style="top:619.6px;font-size:22.5px;letter-spacing:-0.02px;right:2061.9px;color:#242424;">22.93</div>
<div class="t sb" style="top:619.6px;font-size:22.5px;letter-spacing:0.30px;right:1870.2px;color:#242424;">116.51</div>
<div class="t sb" style="top:619.6px;font-size:22.5px;letter-spacing:0.02px;right:1677.4px;color:#242424;">681.56</div>
<div class="t sb" style="top:619.6px;font-size:22.5px;letter-spacing:0.30px;right:1469.3px;color:#242424;">115.91</div>
<div class="t sb" style="top:619.6px;font-size:22.5px;letter-spacing:-0.15px;right:1292.5px;color:#242424;">9.73%</div>
<div class="t sb" style="top:621.1px;font-size:19.5px;letter-spacing:-0.89px;left:2259.7px;color:#1aab40;">7%</div>
<div class="t sb" style="top:619.6px;font-size:22.5px;letter-spacing:0.30px;right:1082.9px;color:#6e6e6e;">112.72</div>
<div class="t sb" style="top:619.6px;font-size:22.5px;letter-spacing:-0.02px;right:886.0px;color:#242424;">29.59</div>
<div class="t sb" style="top:619.6px;font-size:22.5px;letter-spacing:0.02px;right:696.0px;color:#242424;">123.62</div>
<div class="t sb" style="top:619.6px;font-size:22.5px;letter-spacing:0.02px;right:501.2px;color:#242424;">735.49</div>
<div class="t sb" style="top:621.1px;font-size:19.5px;letter-spacing:-0.89px;left:3033.3px;color:#1aab40;">2%</div>
<div class="t sb" style="top:619.6px;font-size:22.5px;letter-spacing:0.02px;right:294.2px;color:#242424;">126.08</div>
<div class="t sb" style="top:619.6px;font-size:22.5px;letter-spacing:-0.15px;right:117.6px;color:#242424;">9.62%</div>
<div class="pm" style="left:114.2px;top:667.3px"></div>
<div class="t sb" style="top:665.7px;font-size:23.5px;letter-spacing:-1.24px;left:140.8px;">APAC</div>
<div class="t sb" style="top:666.8px;font-size:22.5px;letter-spacing:-0.02px;right:3046.5px;color:#242424;">28.59</div>
<div class="t sb" style="top:666.8px;font-size:22.5px;letter-spacing:0.02px;right:2853.3px;color:#242424;">190.57</div>
<div class="t sb" style="top:666.8px;font-size:22.5px;letter-spacing:-0.02px;right:2645.5px;color:#242424;">30.52</div>
<div class="t sb" style="top:666.8px;font-size:22.5px;letter-spacing:-0.15px;right:2468.4px;color:#242424;">2.70%</div>
<div class="t sb" style="top:668.3px;font-size:19.5px;letter-spacing:-0.89px;left:1083.8px;color:#1aab40;">7%</div>
<div class="t sb" style="top:666.8px;font-size:22.5px;letter-spacing:-0.02px;right:2258.9px;color:#6e6e6e;">28.33</div>
<div class="t sb" style="top:666.8px;font-size:22.5px;letter-spacing:-0.09px;right:2062.0px;color:#242424;">7.26</div>
<div class="t sb" style="top:666.8px;font-size:22.5px;letter-spacing:-0.02px;right:1870.5px;color:#242424;">39.62</div>
<div class="t sb" style="top:666.8px;font-size:22.5px;letter-spacing:0.02px;right:1677.4px;color:#242424;">220.22</div>
<div class="t sb" style="top:666.8px;font-size:22.5px;letter-spacing:-0.02px;right:1469.6px;color:#242424;">35.18</div>
<div class="t sb" style="top:666.8px;font-size:22.5px;letter-spacing:-0.15px;right:1292.5px;color:#242424;">3.19%</div>
<div class="t sb" style="top:668.3px;font-size:19.5px;letter-spacing:-0.89px;left:2259.7px;color:#1aab40;">9%</div>
<div class="t sb" style="top:666.8px;font-size:22.5px;letter-spacing:-0.02px;right:1083.2px;color:#6e6e6e;">39.20</div>
<div class="t sb" style="top:666.8px;font-size:22.5px;letter-spacing:-0.02px;right:886.0px;color:#242424;">10.06</div>
<div class="t sb" style="top:666.8px;font-size:22.5px;letter-spacing:-0.02px;right:696.0px;color:#242424;">37.71</div>
<div class="t sb" style="top:666.8px;font-size:22.5px;letter-spacing:0.02px;right:501.2px;color:#242424;">245.38</div>
<div class="t sb" style="top:668.3px;font-size:19.5px;letter-spacing:-0.89px;left:3033.3px;color:#1aab40;">4%</div>
<div class="t sb" style="top:666.8px;font-size:22.5px;letter-spacing:-0.02px;right:294.3px;color:#242424;">36.37</div>
<div class="t sb" style="top:666.8px;font-size:22.5px;letter-spacing:-0.15px;right:117.6px;color:#242424;">3.14%</div>
<div class="pm" style="left:132.3px;top:714.5px"></div>
<div class="t sb" style="top:712.9px;font-size:23.5px;letter-spacing:-0.46px;left:158.9px;">Beverages</div>
<div class="t sb" style="top:714.0px;font-size:22.5px;letter-spacing:-0.02px;right:3046.5px;color:#242424;">20.59</div>
<div class="t sb" style="top:714.0px;font-size:22.5px;letter-spacing:0.02px;right:2853.3px;color:#242424;">165.09</div>
<div class="t sb" style="top:714.0px;font-size:22.5px;letter-spacing:-0.02px;right:2645.5px;color:#242424;">23.21</div>
<div class="t sb" style="top:714.0px;font-size:22.5px;letter-spacing:-0.15px;right:2468.4px;color:#242424;">2.29%</div>
<div class="t sb" style="top:714.0px;font-size:22.5px;letter-spacing:-0.02px;right:2258.9px;color:#6e6e6e;">20.44</div>
<div class="t sb" style="top:714.0px;font-size:22.5px;letter-spacing:-0.09px;right:2062.0px;color:#242424;">5.23</div>
<div class="t sb" style="top:714.0px;font-size:22.5px;letter-spacing:-0.02px;right:1870.5px;color:#242424;">30.88</div>
<div class="t sb" style="top:714.0px;font-size:22.5px;letter-spacing:0.02px;right:1677.4px;color:#242424;">189.87</div>
<div class="t sb" style="top:714.0px;font-size:22.5px;letter-spacing:-0.02px;right:1469.6px;color:#242424;">26.38</div>
<div class="t sb" style="top:714.0px;font-size:22.5px;letter-spacing:-0.15px;right:1292.5px;color:#242424;">2.76%</div>
<div class="t sb" style="top:715.5px;font-size:19.5px;letter-spacing:-0.89px;left:2259.7px;color:#1aab40;">9%</div>
<div class="t sb" style="top:714.0px;font-size:22.5px;letter-spacing:-0.02px;right:1083.2px;color:#6e6e6e;">30.59</div>
<div class="t sb" style="top:714.0px;font-size:22.5px;letter-spacing:-0.09px;right:886.1px;color:#242424;">7.84</div>
<div class="t sb" style="top:714.0px;font-size:22.5px;letter-spacing:-0.02px;right:696.0px;color:#242424;">27.38</div>
<div class="t sb" style="top:714.0px;font-size:22.5px;letter-spacing:0.02px;right:501.2px;color:#242424;">205.81</div>
<div class="t sb" style="top:714.0px;font-size:22.5px;letter-spacing:-0.02px;right:294.3px;color:#242424;">26.47</div>
<div class="t sb" style="top:714.0px;font-size:22.5px;letter-spacing:-0.15px;right:117.6px;color:#242424;">2.73%</div>
<div class="t" style="top:761.0px;font-size:22.5px;letter-spacing:-0.75px;left:168.4px;">Juices</div>
<div class="t" style="top:761.2px;font-size:22.5px;letter-spacing:-0.35px;right:3046.8px;color:#242424;">10.03</div>
<div class="t" style="top:761.2px;font-size:22.5px;letter-spacing:-0.35px;right:2853.6px;color:#242424;">75.87</div>
<div class="t" style="top:761.2px;font-size:22.5px;letter-spacing:-0.41px;right:2645.9px;color:#242424;">9.36</div>
<div class="t" style="top:761.2px;font-size:22.5px;letter-spacing:-0.55px;right:2468.8px;color:#242424;">0.85%</div>
<div class="t" style="top:762.7px;font-size:19.5px;letter-spacing:-0.33px;left:1083.8px;color:#d64554;">-16%</div>
<div class="t" style="top:761.2px;font-size:22.5px;letter-spacing:-0.35px;right:2259.2px;color:#6e6e6e;">10.01</div>
<div class="t" style="top:761.2px;font-size:22.5px;letter-spacing:-0.41px;right:2062.3px;color:#242424;">2.55</div>
<div class="t" style="top:761.2px;font-size:22.5px;letter-spacing:-0.35px;right:1870.8px;color:#242424;">15.17</div>
<div class="t" style="top:761.2px;font-size:22.5px;letter-spacing:-0.35px;right:1677.7px;color:#242424;">87.98</div>
<div class="t" style="top:761.2px;font-size:22.5px;letter-spacing:-0.35px;right:1469.9px;color:#242424;">13.39</div>
<div class="t" style="top:761.2px;font-size:22.5px;letter-spacing:-0.55px;right:1292.9px;color:#242424;">1.17%</div>
<div class="t" style="top:761.2px;font-size:22.5px;letter-spacing:-0.01px;right:1083.2px;color:#6e6e6e;">15.11</div>
<div class="t" style="top:761.2px;font-size:22.5px;letter-spacing:-0.41px;right:886.4px;color:#242424;">3.85</div>
<div class="t" style="top:761.2px;font-size:22.5px;letter-spacing:-0.35px;right:696.3px;color:#242424;">12.03</div>
<div class="t" style="top:761.2px;font-size:22.5px;letter-spacing:-0.35px;right:501.5px;color:#242424;">96.47</div>
<div class="t" style="top:761.2px;font-size:22.5px;letter-spacing:-0.35px;right:294.6px;color:#242424;">14.17</div>
<div class="t" style="top:761.2px;font-size:22.5px;letter-spacing:-0.55px;right:118.0px;color:#242424;">1.28%</div>
<div class="t" style="top:808.2px;font-size:22.5px;letter-spacing:-0.26px;left:168.4px;">Soda</div>
<div class="t" style="top:808.4px;font-size:22.5px;letter-spacing:-0.41px;right:3046.9px;color:#242424;">8.06</div>
<div class="t" style="top:808.4px;font-size:22.5px;letter-spacing:-0.35px;right:2853.6px;color:#242424;">68.15</div>
<div class="t" style="top:808.4px;font-size:22.5px;letter-spacing:-0.01px;right:2645.5px;color:#242424;">11.00</div>
<div class="t" style="top:808.4px;font-size:22.5px;letter-spacing:-0.55px;right:2468.8px;color:#242424;">1.10%</div>
<div class="t" style="top:809.9px;font-size:19.5px;letter-spacing:-0.71px;left:1083.8px;color:#1aab40;">21%</div>
<div class="t" style="top:808.4px;font-size:22.5px;letter-spacing:-0.41px;right:2259.3px;color:#6e6e6e;">8.03</div>
<div class="t" style="top:808.4px;font-size:22.5px;letter-spacing:-0.41px;right:2062.3px;color:#242424;">2.05</div>
<div class="t" style="top:808.4px;font-size:22.5px;letter-spacing:-0.01px;right:1870.5px;color:#242424;">11.92</div>
<div class="t" style="top:808.4px;font-size:22.5px;letter-spacing:-0.35px;right:1677.7px;color:#242424;">77.85</div>
<div class="t" style="top:808.4px;font-size:22.5px;letter-spacing:-0.35px;right:1469.9px;color:#242424;">10.67</div>
<div class="t" style="top:808.4px;font-size:22.5px;letter-spacing:-0.55px;right:1292.9px;color:#242424;">1.27%</div>
<div class="t" style="top:809.9px;font-size:19.5px;letter-spacing:-0.71px;left:2259.7px;color:#1aab40;">23%</div>
<div class="t" style="top:808.4px;font-size:22.5px;letter-spacing:-0.01px;right:1083.2px;color:#6e6e6e;">11.87</div>
<div class="t" style="top:808.4px;font-size:22.5px;letter-spacing:-0.41px;right:886.4px;color:#242424;">3.03</div>
<div class="t" style="top:808.4px;font-size:22.5px;letter-spacing:-0.01px;right:696.0px;color:#242424;">11.37</div>
<div class="t" style="top:808.4px;font-size:22.5px;letter-spacing:-0.35px;right:501.5px;color:#242424;">84.07</div>
<div class="t" style="top:808.4px;font-size:22.5px;letter-spacing:-0.41px;right:294.7px;color:#242424;">9.16</div>
<div class="t" style="top:808.4px;font-size:22.5px;letter-spacing:-0.55px;right:118.0px;color:#242424;">1.12%</div>
<div class="t" style="top:855.4px;font-size:22.5px;letter-spacing:0.27px;left:168.4px;">Tea &amp; Coffee</div>
<div class="t" style="top:855.6px;font-size:22.5px;letter-spacing:-0.41px;right:3046.9px;color:#242424;">2.50</div>
<div class="t" style="top:855.6px;font-size:22.5px;letter-spacing:-0.35px;right:2853.6px;color:#242424;">21.07</div>
<div class="t" style="top:855.6px;font-size:22.5px;letter-spacing:-0.41px;right:2645.9px;color:#242424;">2.85</div>
<div class="t" style="top:855.6px;font-size:22.5px;letter-spacing:-0.55px;right:2468.8px;color:#242424;">0.34%</div>
<div class="t" style="top:855.6px;font-size:22.5px;letter-spacing:-0.41px;right:2259.3px;color:#6e6e6e;">2.50</div>
<div class="t" style="top:855.6px;font-size:22.5px;letter-spacing:-0.41px;right:2062.3px;color:#242424;">0.64</div>
<div class="t" style="top:855.6px;font-size:22.5px;letter-spacing:-0.41px;right:1870.9px;color:#242424;">3.79</div>
<div class="t" style="top:855.6px;font-size:22.5px;letter-spacing:-0.35px;right:1677.7px;color:#242424;">24.04</div>
<div class="t" style="top:855.6px;font-size:22.5px;letter-spacing:-0.41px;right:1470.0px;color:#242424;">2.32</div>
<div class="t" style="top:855.6px;font-size:22.5px;letter-spacing:-0.55px;right:1292.9px;color:#242424;">0.32%</div>
<div class="t" style="top:855.6px;font-size:22.5px;letter-spacing:-0.41px;right:1083.6px;color:#6e6e6e;">3.79</div>
<div class="t" style="top:855.6px;font-size:22.5px;letter-spacing:-0.41px;right:886.4px;color:#242424;">0.96</div>
<div class="t" style="top:855.6px;font-size:22.5px;letter-spacing:-0.41px;right:696.4px;color:#242424;">3.99</div>
<div class="t" style="top:855.6px;font-size:22.5px;letter-spacing:-0.35px;right:501.5px;color:#242424;">25.28</div>
<div class="t" style="top:855.6px;font-size:22.5px;letter-spacing:-0.41px;right:294.7px;color:#242424;">3.13</div>
<div class="t" style="top:855.6px;font-size:22.5px;letter-spacing:-0.55px;right:118.0px;color:#242424;">0.34%</div>
<div class="pm" style="left:132.3px;top:903.4px"></div>
<div class="t sb" style="top:901.8px;font-size:23.5px;letter-spacing:0.34px;left:158.9px;">Water</div>
<div class="t sb" style="top:902.8px;font-size:22.5px;letter-spacing:-0.09px;right:3046.6px;color:#242424;">8.00</div>
<div class="t sb" style="top:902.8px;font-size:22.5px;letter-spacing:-0.02px;right:2853.3px;color:#242424;">25.48</div>
<div class="t sb" style="top:902.8px;font-size:22.5px;letter-spacing:-0.09px;right:2645.6px;color:#242424;">7.31</div>
<div class="t sb" style="top:902.8px;font-size:22.5px;letter-spacing:-0.15px;right:2468.4px;color:#242424;">0.42%</div>
<div class="t sb" style="top:902.8px;font-size:22.5px;letter-spacing:-0.09px;right:2259.0px;color:#6e6e6e;">7.99</div>
<div class="t sb" style="top:902.8px;font-size:22.5px;letter-spacing:-0.09px;right:2062.0px;color:#242424;">2.03</div>
<div class="t sb" style="top:902.8px;font-size:22.5px;letter-spacing:-0.09px;right:1870.6px;color:#242424;">8.74</div>
<div class="t sb" style="top:902.8px;font-size:22.5px;letter-spacing:-0.02px;right:1677.4px;color:#242424;">30.35</div>
<div class="t sb" style="top:902.8px;font-size:22.5px;letter-spacing:-0.09px;right:1469.7px;color:#242424;">8.80</div>
<div class="t sb" style="top:902.8px;font-size:22.5px;letter-spacing:-0.15px;right:1292.5px;color:#242424;">0.43%</div>
<div class="t sb" style="top:902.8px;font-size:22.5px;letter-spacing:-0.09px;right:1083.3px;color:#6e6e6e;">8.73</div>
<div class="t sb" style="top:902.8px;font-size:22.5px;letter-spacing:-0.09px;right:886.1px;color:#242424;">2.22</div>
<div class="t sb" style="top:902.8px;font-size:22.5px;letter-spacing:-0.02px;right:696.0px;color:#242424;">10.33</div>
<div class="t sb" style="top:902.8px;font-size:22.5px;letter-spacing:-0.02px;right:501.2px;color:#242424;">39.57</div>
<div class="t sb" style="top:904.4px;font-size:19.5px;letter-spacing:-0.71px;left:3033.3px;color:#1aab40;">28%</div>
<div class="t sb" style="top:902.8px;font-size:22.5px;letter-spacing:-0.09px;right:294.3px;color:#242424;">9.90</div>
<div class="t sb" style="top:902.8px;font-size:22.5px;letter-spacing:-0.15px;right:117.6px;color:#242424;">0.41%</div>
<div class="t" style="top:949.8px;font-size:22.5px;letter-spacing:0.52px;left:168.4px;">Mineral Water</div>
<div class="t" style="top:950.0px;font-size:22.5px;letter-spacing:-0.41px;right:3046.9px;color:#242424;">6.66</div>
<div class="t" style="top:950.0px;font-size:22.5px;letter-spacing:-0.35px;right:2853.6px;color:#242424;">21.38</div>
<div class="t" style="top:950.0px;font-size:22.5px;letter-spacing:-0.41px;right:2645.9px;color:#242424;">6.06</div>
<div class="t" style="top:950.0px;font-size:22.5px;letter-spacing:-0.55px;right:2468.8px;color:#242424;">0.36%</div>
<div class="t" style="top:950.0px;font-size:22.5px;letter-spacing:-0.41px;right:2259.3px;color:#6e6e6e;">6.65</div>
<div class="t" style="top:950.0px;font-size:22.5px;letter-spacing:-0.41px;right:2062.3px;color:#242424;">1.69</div>
<div class="t" style="top:950.0px;font-size:22.5px;letter-spacing:-0.41px;right:1870.9px;color:#242424;">7.74</div>
<div class="t" style="top:950.0px;font-size:22.5px;letter-spacing:-0.01px;right:1677.4px;color:#242424;">26.11</div>
<div class="t" style="top:950.0px;font-size:22.5px;letter-spacing:-0.41px;right:1470.0px;color:#242424;">7.69</div>
<div class="t" style="top:950.0px;font-size:22.5px;letter-spacing:-0.55px;right:1292.9px;color:#242424;">0.35%</div>
<div class="t" style="top:950.0px;font-size:22.5px;letter-spacing:-0.41px;right:1083.6px;color:#6e6e6e;">7.73</div>
<div class="t" style="top:950.0px;font-size:22.5px;letter-spacing:-0.41px;right:886.4px;color:#242424;">1.96</div>
<div class="t" style="top:950.0px;font-size:22.5px;letter-spacing:-0.41px;right:696.4px;color:#242424;">9.32</div>
<div class="t" style="top:950.0px;font-size:22.5px;letter-spacing:-0.35px;right:501.5px;color:#242424;">35.30</div>
<div class="t" style="top:951.6px;font-size:19.5px;letter-spacing:-0.71px;left:3033.3px;color:#1aab40;">33%</div>
<div class="t" style="top:950.0px;font-size:22.5px;letter-spacing:-0.41px;right:294.7px;color:#242424;">8.98</div>
<div class="t" style="top:950.0px;font-size:22.5px;letter-spacing:-0.55px;right:118.0px;color:#242424;">0.35%</div>
<div class="t" style="top:997.0px;font-size:22.5px;letter-spacing:0.33px;left:168.4px;">Sparkling Water</div>
<div class="t" style="top:997.2px;font-size:22.5px;letter-spacing:-0.41px;right:3046.9px;color:#242424;">1.34</div>
<div class="t" style="top:997.2px;font-size:22.5px;letter-spacing:-0.41px;right:2853.7px;color:#242424;">4.10</div>
<div class="t" style="top:997.2px;font-size:22.5px;letter-spacing:-0.41px;right:2645.9px;color:#242424;">1.25</div>
<div class="t" style="top:997.2px;font-size:22.5px;letter-spacing:-0.55px;right:2468.8px;color:#242424;">0.05%</div>
<div class="t" style="top:997.2px;font-size:22.5px;letter-spacing:-0.41px;right:2259.3px;color:#6e6e6e;">1.34</div>
<div class="t" style="top:997.2px;font-size:22.5px;letter-spacing:-0.41px;right:2062.3px;color:#242424;">0.34</div>
<div class="t" style="top:997.2px;font-size:22.5px;letter-spacing:-0.41px;right:1870.9px;color:#242424;">1.01</div>
<div class="t" style="top:997.2px;font-size:22.5px;letter-spacing:-0.41px;right:1677.8px;color:#242424;">4.24</div>
<div class="t" style="top:997.2px;font-size:22.5px;letter-spacing:0.01px;right:1469.6px;color:#242424;">1.11</div>
<div class="t" style="top:997.2px;font-size:22.5px;letter-spacing:-0.55px;right:1292.9px;color:#242424;">0.08%</div>
<div class="t" style="top:997.2px;font-size:22.5px;letter-spacing:-0.41px;right:1083.6px;color:#6e6e6e;">1.01</div>
<div class="t" style="top:997.2px;font-size:22.5px;letter-spacing:-0.41px;right:886.4px;color:#242424;">0.26</div>
<div class="t" style="top:997.2px;font-size:22.5px;letter-spacing:-0.41px;right:696.4px;color:#242424;">1.01</div>
<div class="t" style="top:997.2px;font-size:22.5px;letter-spacing:-0.41px;right:501.6px;color:#242424;">4.27</div>
<div class="t" style="top:997.2px;font-size:22.5px;letter-spacing:-0.41px;right:294.7px;color:#242424;">0.92</div>
<div class="t" style="top:997.2px;font-size:22.5px;letter-spacing:-0.55px;right:118.0px;color:#242424;">0.06%</div>
<div class="pm" style="left:114.2px;top:1045.0px"></div>
<div class="t sb" style="top:1043.4px;font-size:23.5px;letter-spacing:-1.35px;left:140.8px;">EMEA</div>
<div class="t sb" style="top:1044.4px;font-size:22.5px;letter-spacing:-0.02px;right:3046.5px;color:#242424;">61.68</div>
<div class="t sb" style="top:1044.4px;font-size:22.5px;letter-spacing:0.02px;right:2853.3px;color:#242424;">396.32</div>
<div class="t sb" style="top:1044.4px;font-size:22.5px;letter-spacing:-0.02px;right:2645.5px;color:#242424;">51.13</div>
<div class="t sb" style="top:1044.4px;font-size:22.5px;letter-spacing:-0.15px;right:2468.4px;color:#242424;">5.52%</div>
<div class="t sb" style="top:1046.0px;font-size:19.5px;letter-spacing:-0.89px;left:1083.8px;color:#1aab40;">5%</div>
<div class="t sb" style="top:1044.4px;font-size:22.5px;letter-spacing:-0.02px;right:2258.9px;color:#6e6e6e;">60.54</div>
<div class="t sb" style="top:1044.4px;font-size:22.5px;letter-spacing:-0.02px;right:2061.9px;color:#242424;">15.67</div>
<div class="t sb" style="top:1044.4px;font-size:22.5px;letter-spacing:-0.02px;right:1870.5px;color:#242424;">76.88</div>
<div class="t sb" style="top:1044.4px;font-size:22.5px;letter-spacing:0.02px;right:1677.4px;color:#242424;">461.33</div>
<div class="t sb" style="top:1044.4px;font-size:22.5px;letter-spacing:-0.02px;right:1469.6px;color:#242424;">80.73</div>
<div class="t sb" style="top:1044.4px;font-size:22.5px;letter-spacing:-0.15px;right:1292.5px;color:#242424;">6.54%</div>
<div class="t sb" style="top:1046.0px;font-size:19.5px;letter-spacing:-0.89px;left:2259.7px;color:#1aab40;">7%</div>
<div class="t sb" style="top:1044.4px;font-size:22.5px;letter-spacing:-0.02px;right:1083.2px;color:#6e6e6e;">75.21</div>
<div class="t sb" style="top:1044.4px;font-size:22.5px;letter-spacing:-0.02px;right:886.0px;color:#242424;">19.53</div>
<div class="t sb" style="top:1044.4px;font-size:22.5px;letter-spacing:-0.02px;right:696.0px;color:#242424;">85.91</div>
<div class="t sb" style="top:1044.4px;font-size:22.5px;letter-spacing:0.30px;right:500.9px;color:#242424;">490.11</div>
<svg style="left:0;top:0" width="1" height="1"><path d="M3036.0,1058.4 L3044.4,1049.2 L3052.8,1058.4" fill="none" stroke="#1aab40" stroke-width="2.6" stroke-linecap="round" stroke-linejoin="round"/></svg>
<div class="t sb" style="top:1044.4px;font-size:22.5px;letter-spacing:-0.02px;right:294.3px;color:#242424;">89.72</div>
<div class="t sb" style="top:1044.4px;font-size:22.5px;letter-spacing:-0.15px;right:117.6px;color:#242424;">6.48%</div>
<div class="pm" style="left:132.3px;top:1092.2px"></div>
<div class="t sb" style="top:1090.6px;font-size:23.5px;letter-spacing:-0.46px;left:158.9px;">Beverages</div>
<div class="t sb" style="top:1091.7px;font-size:22.5px;letter-spacing:-0.02px;right:3046.5px;color:#242424;">45.39</div>
<div class="t sb" style="top:1091.7px;font-size:22.5px;letter-spacing:0.02px;right:2853.3px;color:#242424;">346.09</div>
<div class="t sb" style="top:1091.7px;font-size:22.5px;letter-spacing:-0.02px;right:2645.5px;color:#242424;">34.29</div>
<div class="t sb" style="top:1091.7px;font-size:22.5px;letter-spacing:-0.15px;right:2468.4px;color:#242424;">5.00%</div>
<div class="t sb" style="top:1093.2px;font-size:19.5px;letter-spacing:-0.89px;left:1083.8px;color:#1aab40;">9%</div>
<div class="t sb" style="top:1091.7px;font-size:22.5px;letter-spacing:-0.02px;right:2258.9px;color:#6e6e6e;">44.63</div>
<div class="t sb" style="top:1091.7px;font-size:22.5px;letter-spacing:0.31px;right:2061.6px;color:#242424;">11.53</div>
<div class="t sb" style="top:1091.7px;font-size:22.5px;letter-spacing:-0.02px;right:1870.5px;color:#242424;">57.32</div>
<div class="t sb" style="top:1091.7px;font-size:22.5px;letter-spacing:0.02px;right:1677.4px;color:#242424;">401.47</div>
<div class="t sb" style="top:1091.7px;font-size:22.5px;letter-spacing:-0.02px;right:1469.6px;color:#242424;">60.01</div>
<div class="t sb" style="top:1091.7px;font-size:22.5px;letter-spacing:-0.15px;right:1292.5px;color:#242424;">5.75%</div>
<div class="t sb" style="top:1093.2px;font-size:19.5px;letter-spacing:-0.89px;left:2259.7px;color:#1aab40;">8%</div>
<div class="t sb" style="top:1091.7px;font-size:22.5px;letter-spacing:-0.02px;right:1083.2px;color:#6e6e6e;">56.23</div>
<div class="t sb" style="top:1091.7px;font-size:22.5px;letter-spacing:-0.02px;right:886.0px;color:#242424;">14.56</div>
<div class="t sb" style="top:1091.7px;font-size:22.5px;letter-spacing:-0.02px;right:696.0px;color:#242424;">64.02</div>
<div class="t sb" style="top:1091.7px;font-size:22.5px;letter-spacing:0.02px;right:501.2px;color:#242424;">425.82</div>
<div class="t sb" style="top:1091.7px;font-size:22.5px;letter-spacing:-0.02px;right:294.3px;color:#242424;">67.26</div>
<div class="t sb" style="top:1091.7px;font-size:22.5px;letter-spacing:-0.15px;right:117.6px;color:#242424;">5.66%</div>
<div class="t" style="top:1138.7px;font-size:22.5px;letter-spacing:-0.75px;left:168.4px;">Juices</div>
<div class="t" style="top:1138.9px;font-size:22.5px;letter-spacing:-0.35px;right:3046.8px;color:#242424;">22.71</div>
<div class="t" style="top:1138.9px;font-size:22.5px;letter-spacing:-0.30px;right:2853.6px;color:#242424;">160.93</div>
<div class="t" style="top:1138.9px;font-size:22.5px;letter-spacing:-0.35px;right:2645.8px;color:#242424;">15.98</div>
<div class="t" style="top:1138.9px;font-size:22.5px;letter-spacing:-0.55px;right:2468.8px;color:#242424;">2.54%</div>
<div class="t" style="top:1140.4px;font-size:19.5px;letter-spacing:-0.71px;left:1083.8px;color:#1aab40;">19%</div>
<div class="t" style="top:1138.9px;font-size:22.5px;letter-spacing:-0.41px;right:2062.3px;color:#242424;">5.77</div>
<div class="t" style="top:1138.9px;font-size:22.5px;letter-spacing:-0.35px;right:1870.8px;color:#242424;">29.92</div>
<div class="t" style="top:1138.9px;font-size:22.5px;letter-spacing:-0.30px;right:1677.7px;color:#242424;">185.02</div>
<div class="t" style="top:1138.9px;font-size:22.5px;letter-spacing:-0.35px;right:1469.9px;color:#242424;">29.64</div>
<div class="t" style="top:1138.9px;font-size:22.5px;letter-spacing:-0.55px;right:1292.9px;color:#242424;">2.46%</div>
<div class="t" style="top:1138.9px;font-size:22.5px;letter-spacing:-0.35px;right:1083.5px;color:#6e6e6e;">29.68</div>
<div class="t" style="top:1138.9px;font-size:22.5px;letter-spacing:-0.41px;right:886.4px;color:#242424;">7.60</div>
<div class="t" style="top:1138.9px;font-size:22.5px;letter-spacing:-0.35px;right:696.3px;color:#242424;">26.39</div>
<div class="t" style="top:1138.9px;font-size:22.5px;letter-spacing:-0.30px;right:501.5px;color:#242424;">199.64</div>
<div class="t" style="top:1138.9px;font-size:22.5px;letter-spacing:-0.35px;right:294.6px;color:#242424;">36.87</div>
<div class="t" style="top:1138.9px;font-size:22.5px;letter-spacing:-0.55px;right:118.0px;color:#242424;">2.65%</div>
<div class="t" style="top:1185.9px;font-size:22.5px;letter-spacing:-0.26px;left:168.4px;">Soda</div>
<div class="t" style="top:1186.1px;font-size:22.5px;letter-spacing:-0.35px;right:3046.8px;color:#242424;">17.04</div>
<div class="t" style="top:1186.1px;font-size:22.5px;letter-spacing:-0.30px;right:2853.6px;color:#242424;">137.65</div>
<div class="t" style="top:1186.1px;font-size:22.5px;letter-spacing:-0.35px;right:2645.8px;color:#242424;">13.22</div>
<div class="t" style="top:1186.1px;font-size:22.5px;letter-spacing:-0.55px;right:2468.8px;color:#242424;">1.83%</div>
<div class="t" style="top:1186.1px;font-size:22.5px;letter-spacing:-0.35px;right:2259.2px;color:#6e6e6e;">16.94</div>
<div class="t" style="top:1186.1px;font-size:22.5px;letter-spacing:-0.41px;right:2062.3px;color:#242424;">4.33</div>
<div class="t" style="top:1186.1px;font-size:22.5px;letter-spacing:-0.35px;right:1870.8px;color:#242424;">17.94</div>
<div class="t" style="top:1186.1px;font-size:22.5px;letter-spacing:-0.30px;right:1677.7px;color:#242424;">163.73</div>
<div class="t" style="top:1186.1px;font-size:22.5px;letter-spacing:-0.35px;right:1469.9px;color:#242424;">24.00</div>
<div class="t" style="top:1186.1px;font-size:22.5px;letter-spacing:-0.55px;right:1292.9px;color:#242424;">2.59%</div>
<div class="t" style="top:1187.6px;font-size:19.5px;letter-spacing:-0.71px;left:2259.7px;color:#1aab40;">19%</div>
<div class="t" style="top:1186.1px;font-size:22.5px;letter-spacing:-0.35px;right:1083.5px;color:#6e6e6e;">17.79</div>
<div class="t" style="top:1186.1px;font-size:22.5px;letter-spacing:-0.41px;right:886.4px;color:#242424;">4.56</div>
<div class="t" style="top:1186.1px;font-size:22.5px;letter-spacing:-0.35px;right:696.3px;color:#242424;">26.61</div>
<div class="t" style="top:1186.1px;font-size:22.5px;letter-spacing:-0.30px;right:501.5px;color:#242424;">169.90</div>
<div class="t" style="top:1186.1px;font-size:22.5px;letter-spacing:-0.35px;right:294.6px;color:#242424;">20.02</div>
<div class="t" style="top:1186.1px;font-size:22.5px;letter-spacing:-0.55px;right:118.0px;color:#242424;">2.26%</div>
<div class="t" style="top:1233.1px;font-size:22.5px;letter-spacing:0.27px;left:168.4px;">Tea &amp; Coffee</div>
<div class="t" style="top:1233.3px;font-size:22.5px;letter-spacing:-0.41px;right:3046.9px;color:#242424;">5.63</div>
<div class="t" style="top:1233.3px;font-size:22.5px;letter-spacing:-0.35px;right:2853.6px;color:#242424;">47.51</div>
<div class="t" style="top:1233.3px;font-size:22.5px;letter-spacing:-0.41px;right:2645.9px;color:#242424;">5.08</div>
<div class="t" style="top:1233.3px;font-size:22.5px;letter-spacing:-0.55px;right:2468.8px;color:#242424;">0.63%</div>
<div class="t" style="top:1233.3px;font-size:22.5px;letter-spacing:-0.41px;right:2259.3px;color:#6e6e6e;">5.62</div>
<div class="t" style="top:1233.3px;font-size:22.5px;letter-spacing:-0.41px;right:2062.3px;color:#242424;">1.43</div>
<div class="t" style="top:1233.3px;font-size:22.5px;letter-spacing:-0.41px;right:1870.9px;color:#242424;">9.46</div>
<div class="t" style="top:1233.3px;font-size:22.5px;letter-spacing:-0.35px;right:1677.7px;color:#242424;">52.72</div>
<div class="t" style="top:1233.3px;font-size:22.5px;letter-spacing:-0.41px;right:1470.0px;color:#242424;">6.37</div>
<div class="t" style="top:1233.3px;font-size:22.5px;letter-spacing:-0.55px;right:1292.9px;color:#242424;">0.70%</div>
<div class="t" style="top:1233.3px;font-size:22.5px;letter-spacing:-0.41px;right:1083.6px;color:#6e6e6e;">9.44</div>
<div class="t" style="top:1233.3px;font-size:22.5px;letter-spacing:-0.41px;right:886.4px;color:#242424;">2.40</div>
<div class="t" style="top:1233.3px;font-size:22.5px;letter-spacing:-0.01px;right:696.0px;color:#242424;">11.02</div>
<div class="t" style="top:1233.3px;font-size:22.5px;letter-spacing:-0.35px;right:501.5px;color:#242424;">56.28</div>
<div class="t" style="top:1233.3px;font-size:22.5px;letter-spacing:-0.35px;right:294.6px;color:#242424;">10.38</div>
<div class="t" style="top:1233.3px;font-size:22.5px;letter-spacing:-0.55px;right:118.0px;color:#242424;">0.75%</div>
<div class="pm" style="left:132.3px;top:1281.0px"></div>
<div class="t sb" style="top:1279.4px;font-size:23.5px;letter-spacing:0.34px;left:158.9px;">Water</div>
<div class="t sb" style="top:1280.5px;font-size:22.5px;letter-spacing:-0.02px;right:3046.5px;color:#242424;">16.29</div>
<div class="t sb" style="top:1280.5px;font-size:22.5px;letter-spacing:-0.02px;right:2853.3px;color:#242424;">50.23</div>
<div class="t sb" style="top:1280.5px;font-size:22.5px;letter-spacing:-0.02px;right:2645.5px;color:#242424;">16.84</div>
<div class="t sb" style="top:1280.5px;font-size:22.5px;letter-spacing:-0.15px;right:2468.4px;color:#242424;">0.52%</div>
<div class="t sb" style="top:1282.0px;font-size:19.5px;letter-spacing:-0.33px;left:1083.8px;color:#d64554;">-22%</div>
<div class="t sb" style="top:1280.5px;font-size:22.5px;letter-spacing:-0.02px;right:2258.9px;color:#6e6e6e;">16.26</div>
<div class="t sb" style="top:1280.5px;font-size:22.5px;letter-spacing:-0.09px;right:2062.0px;color:#242424;">4.14</div>
<div class="t sb" style="top:1280.5px;font-size:22.5px;letter-spacing:-0.02px;right:1870.5px;color:#242424;">19.56</div>
<div class="t sb" style="top:1280.5px;font-size:22.5px;letter-spacing:-0.02px;right:1677.4px;color:#242424;">59.87</div>
<div class="t sb" style="top:1280.5px;font-size:22.5px;letter-spacing:-0.02px;right:1469.6px;color:#242424;">20.72</div>
<div class="t sb" style="top:1280.5px;font-size:22.5px;letter-spacing:-0.15px;right:1292.5px;color:#242424;">0.80%</div>
<div class="t sb" style="top:1280.5px;font-size:22.5px;letter-spacing:-0.02px;right:1083.2px;color:#6e6e6e;">19.51</div>
<div class="t sb" style="top:1280.5px;font-size:22.5px;letter-spacing:-0.09px;right:886.1px;color:#242424;">4.97</div>
<div class="t sb" style="top:1280.5px;font-size:22.5px;letter-spacing:-0.02px;right:696.0px;color:#242424;">21.89</div>
<div class="t sb" style="top:1280.5px;font-size:22.5px;letter-spacing:-0.02px;right:501.2px;color:#242424;">64.29</div>
<div class="t sb" style="top:1282.0px;font-size:19.5px;letter-spacing:-0.89px;left:3033.3px;color:#1aab40;">4%</div>
<div class="t sb" style="top:1280.5px;font-size:22.5px;letter-spacing:-0.02px;right:294.3px;color:#242424;">22.45</div>
<div class="t sb" style="top:1280.5px;font-size:22.5px;letter-spacing:-0.15px;right:117.6px;color:#242424;">0.82%</div>
<div class="t" style="top:1327.5px;font-size:22.5px;letter-spacing:0.52px;left:168.4px;">Mineral Water</div>
<div class="t" style="top:1327.7px;font-size:22.5px;letter-spacing:-0.35px;right:3046.8px;color:#242424;">13.55</div>
<div class="t" style="top:1327.7px;font-size:22.5px;letter-spacing:-0.35px;right:2853.6px;color:#242424;">41.84</div>
<div class="t" style="top:1327.7px;font-size:22.5px;letter-spacing:-0.35px;right:2645.8px;color:#242424;">14.33</div>
<div class="t" style="top:1327.7px;font-size:22.5px;letter-spacing:-0.55px;right:2468.8px;color:#242424;">0.41%</div>
<div class="t" style="top:1329.2px;font-size:19.5px;letter-spacing:-0.33px;left:1083.8px;color:#d64554;">-27%</div>
<div class="t" style="top:1327.7px;font-size:22.5px;letter-spacing:-0.35px;right:2259.2px;color:#6e6e6e;">13.53</div>
<div class="t" style="top:1327.7px;font-size:22.5px;letter-spacing:-0.41px;right:2062.3px;color:#242424;">3.44</div>
<div class="t" style="top:1327.7px;font-size:22.5px;letter-spacing:-0.35px;right:1870.8px;color:#242424;">16.70</div>
<div class="t" style="top:1327.7px;font-size:22.5px;letter-spacing:-0.35px;right:1677.7px;color:#242424;">51.06</div>
<div class="t" style="top:1327.7px;font-size:22.5px;letter-spacing:-0.35px;right:1469.9px;color:#242424;">18.62</div>
<div class="t" style="top:1327.7px;font-size:22.5px;letter-spacing:-0.55px;right:1292.9px;color:#242424;">0.68%</div>
<div class="t" style="top:1327.7px;font-size:22.5px;letter-spacing:-0.35px;right:1083.5px;color:#6e6e6e;">16.66</div>
<div class="t" style="top:1327.7px;font-size:22.5px;letter-spacing:-0.41px;right:886.4px;color:#242424;">4.24</div>
<div class="t" style="top:1327.7px;font-size:22.5px;letter-spacing:-0.35px;right:696.3px;color:#242424;">19.39</div>
<div class="t" style="top:1327.7px;font-size:22.5px;letter-spacing:-0.35px;right:501.5px;color:#242424;">52.96</div>
<div class="t" style="top:1327.7px;font-size:22.5px;letter-spacing:-0.35px;right:294.6px;color:#242424;">20.39</div>
<div class="t" style="top:1327.7px;font-size:22.5px;letter-spacing:-0.55px;right:118.0px;color:#242424;">0.70%</div>
<div class="t" style="top:1374.7px;font-size:22.5px;letter-spacing:0.33px;left:168.4px;">Sparkling Water</div>
<div class="t" style="top:1374.9px;font-size:22.5px;letter-spacing:-0.41px;right:3046.9px;color:#242424;">2.75</div>
<div class="t" style="top:1374.9px;font-size:22.5px;letter-spacing:-0.41px;right:2853.7px;color:#242424;">8.39</div>
<div class="t" style="top:1374.9px;font-size:22.5px;letter-spacing:-0.41px;right:2645.9px;color:#242424;">2.51</div>
<div class="t" style="top:1374.9px;font-size:22.5px;letter-spacing:-0.21px;right:2468.5px;color:#242424;">0.11%</div>
<div class="t" style="top:1374.9px;font-size:22.5px;letter-spacing:-0.41px;right:2259.3px;color:#6e6e6e;">2.74</div>
<div class="t" style="top:1374.9px;font-size:22.5px;letter-spacing:-0.41px;right:2062.3px;color:#242424;">0.70</div>
<div class="t" style="top:1374.9px;font-size:22.5px;letter-spacing:-0.41px;right:1870.9px;color:#242424;">2.86</div>
<div class="t" style="top:1374.9px;font-size:22.5px;letter-spacing:-0.41px;right:1677.8px;color:#242424;">8.81</div>
<div class="t" style="top:1374.9px;font-size:22.5px;letter-spacing:-0.41px;right:1470.0px;color:#242424;">2.10</div>
<div class="t" style="top:1374.9px;font-size:22.5px;letter-spacing:-0.55px;right:1292.9px;color:#242424;">0.12%</div>
<div class="t" style="top:1374.9px;font-size:22.5px;letter-spacing:-0.41px;right:1083.6px;color:#6e6e6e;">2.86</div>
<div class="t" style="top:1374.9px;font-size:22.5px;letter-spacing:-0.41px;right:886.4px;color:#242424;">0.73</div>
<div class="t" style="top:1374.9px;font-size:22.5px;letter-spacing:-0.41px;right:696.4px;color:#242424;">2.50</div>
<div class="t" style="top:1374.9px;font-size:22.5px;letter-spacing:-0.01px;right:501.2px;color:#242424;">11.34</div>
<div class="t" style="top:1376.5px;font-size:19.5px;letter-spacing:-0.71px;left:3033.3px;color:#1aab40;">27%</div>
<div class="t" style="top:1374.9px;font-size:22.5px;letter-spacing:-0.41px;right:294.7px;color:#242424;">2.06</div>
<div class="t" style="top:1374.9px;font-size:22.5px;letter-spacing:-0.55px;right:118.0px;color:#242424;">0.12%</div>
<div class="pm" style="left:96.0px;top:1422.7px"></div>
<div class="t sb" style="top:1421.1px;font-size:23.5px;letter-spacing:-0.01px;left:122.6px;">United States</div>
<div class="t sb" style="top:1422.1px;font-size:22.5px;letter-spacing:0.02px;right:3046.5px;color:#242424;">149.23</div>
<div class="t sb" style="top:1422.1px;font-size:22.5px;letter-spacing:0.02px;right:2853.3px;color:#242424;">986.13</div>
<div class="t sb" style="top:1422.1px;font-size:22.5px;letter-spacing:0.02px;right:2645.5px;color:#242424;">142.76</div>
<div class="t sb" style="top:1422.1px;font-size:22.5px;letter-spacing:-0.09px;right:2468.3px;color:#242424;">12.86%</div>
<div class="t sb" style="top:1423.7px;font-size:19.5px;letter-spacing:-0.33px;left:1083.8px;color:#d64554;">-2%</div>
<div class="t sb" style="top:1422.1px;font-size:22.5px;letter-spacing:0.02px;right:2258.9px;color:#6e6e6e;">142.80</div>
<div class="t sb" style="top:1422.1px;font-size:22.5px;letter-spacing:-0.02px;right:2061.9px;color:#242424;">37.91</div>
<div class="t sb" style="top:1422.1px;font-size:22.5px;letter-spacing:0.02px;right:1870.5px;color:#242424;">174.59</div>
<div class="t sb" style="top:1422.1px;font-size:22.5px;letter-spacing:-0.09px;right:1677.5px;color:#242424;">1,167.26</div>
<div class="t sb" style="top:1422.1px;font-size:22.5px;letter-spacing:0.02px;right:1469.6px;color:#242424;">175.48</div>
<div class="t sb" style="top:1422.1px;font-size:22.5px;letter-spacing:-0.09px;right:1292.4px;color:#242424;">15.73%</div>
<div class="t sb" style="top:1423.7px;font-size:19.5px;letter-spacing:-0.89px;left:2259.7px;color:#1aab40;">1%</div>
<div class="t sb" style="top:1422.1px;font-size:22.5px;letter-spacing:0.02px;right:1083.2px;color:#6e6e6e;">165.42</div>
<div class="t sb" style="top:1422.1px;font-size:22.5px;letter-spacing:-0.02px;right:886.0px;color:#242424;">44.34</div>
<div class="t sb" style="top:1422.1px;font-size:22.5px;letter-spacing:0.02px;right:696.0px;color:#242424;">194.81</div>
<div class="t sb" style="top:1422.1px;font-size:22.5px;letter-spacing:-0.09px;right:501.3px;color:#242424;">1,229.74</div>
<div class="t sb" style="top:1422.1px;font-size:22.5px;letter-spacing:0.02px;right:294.2px;color:#242424;">205.45</div>
<div class="t sb" style="top:1422.1px;font-size:22.5px;letter-spacing:-0.09px;right:117.6px;color:#242424;">16.34%</div>
<div class="pm" style="left:114.2px;top:1469.9px"></div>
<div class="t sb" style="top:1468.3px;font-size:23.5px;letter-spacing:-0.08px;left:140.8px;">Central</div>
<div class="t sb" style="top:1469.3px;font-size:22.5px;letter-spacing:-0.02px;right:3046.5px;color:#242424;">25.04</div>
<div class="t sb" style="top:1469.3px;font-size:22.5px;letter-spacing:0.02px;right:2853.3px;color:#242424;">195.90</div>
<div class="t sb" style="top:1469.3px;font-size:22.5px;letter-spacing:-0.02px;right:2645.5px;color:#242424;">31.10</div>
<div class="t sb" style="top:1469.3px;font-size:22.5px;letter-spacing:-0.15px;right:2468.4px;color:#242424;">2.36%</div>
<div class="t sb" style="top:1470.9px;font-size:19.5px;letter-spacing:-0.33px;left:1083.8px;color:#d64554;">-9%</div>
<div class="t sb" style="top:1469.3px;font-size:22.5px;letter-spacing:-0.02px;right:2258.9px;color:#6e6e6e;">24.85</div>
<div class="t sb" style="top:1469.3px;font-size:22.5px;letter-spacing:-0.09px;right:2062.0px;color:#242424;">6.36</div>
<div class="t sb" style="top:1469.3px;font-size:22.5px;letter-spacing:-0.02px;right:1870.5px;color:#242424;">38.35</div>
<div class="t sb" style="top:1469.3px;font-size:22.5px;letter-spacing:0.02px;right:1677.4px;color:#242424;">230.17</div>
<div class="t sb" style="top:1469.3px;font-size:22.5px;letter-spacing:-0.02px;right:1469.6px;color:#242424;">31.82</div>
<div class="t sb" style="top:1469.3px;font-size:22.5px;letter-spacing:-0.15px;right:1292.5px;color:#242424;">3.28%</div>
<div class="t sb" style="top:1470.9px;font-size:19.5px;letter-spacing:-0.89px;left:2259.7px;color:#1aab40;">7%</div>
<div class="t sb" style="top:1469.3px;font-size:22.5px;letter-spacing:-0.02px;right:1083.2px;color:#6e6e6e;">37.93</div>
<div class="t sb" style="top:1469.3px;font-size:22.5px;letter-spacing:-0.09px;right:886.1px;color:#242424;">9.74</div>
<div class="t sb" style="top:1469.3px;font-size:22.5px;letter-spacing:-0.02px;right:696.0px;color:#242424;">37.42</div>
<div class="t sb" style="top:1469.3px;font-size:22.5px;letter-spacing:0.02px;right:501.2px;color:#242424;">238.51</div>
<div class="t sb" style="top:1469.3px;font-size:22.5px;letter-spacing:-0.02px;right:294.3px;color:#242424;">39.63</div>
<div class="t sb" style="top:1469.3px;font-size:22.5px;letter-spacing:-0.15px;right:117.6px;color:#242424;">3.17%</div>
<div class="pm" style="left:132.3px;top:1517.1px"></div>
<div class="t sb" style="top:1515.5px;font-size:23.5px;letter-spacing:-0.46px;left:158.9px;">Beverages</div>
<div class="t sb" style="top:1516.5px;font-size:22.5px;letter-spacing:-0.02px;right:3046.5px;color:#242424;">18.97</div>
<div class="t sb" style="top:1516.5px;font-size:22.5px;letter-spacing:0.02px;right:2853.3px;color:#242424;">173.69</div>
<div class="t sb" style="top:1516.5px;font-size:22.5px;letter-spacing:-0.02px;right:2645.5px;color:#242424;">23.91</div>
<div class="t sb" style="top:1516.5px;font-size:22.5px;letter-spacing:-0.15px;right:2468.4px;color:#242424;">2.07%</div>
<div class="t sb" style="top:1518.1px;font-size:19.5px;letter-spacing:-0.33px;left:1083.8px;color:#d64554;">-10%</div>
<div class="t sb" style="top:1516.5px;font-size:22.5px;letter-spacing:-0.02px;right:2258.9px;color:#6e6e6e;">18.84</div>
<div class="t sb" style="top:1516.5px;font-size:22.5px;letter-spacing:-0.09px;right:2062.0px;color:#242424;">4.82</div>
<div class="t sb" style="top:1516.5px;font-size:22.5px;letter-spacing:-0.02px;right:1870.5px;color:#242424;">28.89</div>
<div class="t sb" style="top:1516.5px;font-size:22.5px;letter-spacing:0.02px;right:1677.4px;color:#242424;">201.56</div>
<div class="t sb" style="top:1516.5px;font-size:22.5px;letter-spacing:-0.02px;right:1469.6px;color:#242424;">23.14</div>
<div class="t sb" style="top:1516.5px;font-size:22.5px;letter-spacing:-0.15px;right:1292.5px;color:#242424;">2.90%</div>
<div class="t sb" style="top:1518.1px;font-size:19.5px;letter-spacing:-0.89px;left:2259.7px;color:#1aab40;">8%</div>
<div class="t sb" style="top:1516.5px;font-size:22.5px;letter-spacing:-0.02px;right:1083.2px;color:#6e6e6e;">28.61</div>
<div class="t sb" style="top:1516.5px;font-size:22.5px;letter-spacing:-0.09px;right:886.1px;color:#242424;">7.34</div>
<div class="t sb" style="top:1516.5px;font-size:22.5px;letter-spacing:-0.02px;right:696.0px;color:#242424;">28.42</div>
<div class="t sb" style="top:1516.5px;font-size:22.5px;letter-spacing:0.02px;right:501.2px;color:#242424;">210.40</div>
<div class="t sb" style="top:1516.5px;font-size:22.5px;letter-spacing:-0.02px;right:294.3px;color:#242424;">30.84</div>
<div class="t sb" style="top:1516.5px;font-size:22.5px;letter-spacing:-0.15px;right:117.6px;color:#242424;">2.80%</div>
<div class="t" style="top:1563.6px;font-size:22.5px;letter-spacing:-0.75px;left:168.4px;">Juices</div>
<div class="t" style="top:1563.8px;font-size:22.5px;letter-spacing:-0.41px;right:3046.9px;color:#242424;">9.95</div>
<div class="t" style="top:1563.8px;font-size:22.5px;letter-spacing:-0.35px;right:2853.6px;color:#242424;">86.63</div>
<div class="t" style="top:1563.8px;font-size:22.5px;letter-spacing:-0.35px;right:2645.8px;color:#242424;">13.13</div>
<div class="t" style="top:1563.8px;font-size:22.5px;letter-spacing:-0.55px;right:2468.8px;color:#242424;">0.91%</div>
<div class="t" style="top:1565.3px;font-size:19.5px;letter-spacing:-0.33px;left:1083.8px;color:#d64554;">-21%</div>
<div class="t" style="top:1563.8px;font-size:22.5px;letter-spacing:-0.41px;right:2259.3px;color:#6e6e6e;">9.92</div>
<div class="t" style="top:1563.8px;font-size:22.5px;letter-spacing:-0.41px;right:2062.3px;color:#242424;">2.53</div>
<div class="t" style="top:1563.8px;font-size:22.5px;letter-spacing:-0.35px;right:1870.8px;color:#242424;">14.24</div>
<div class="t" style="top:1563.8px;font-size:22.5px;letter-spacing:-0.30px;right:1677.7px;color:#242424;">100.35</div>
<div class="t" style="top:1563.8px;font-size:22.5px;letter-spacing:-0.35px;right:1469.9px;color:#242424;">10.08</div>
<div class="t" style="top:1563.8px;font-size:22.5px;letter-spacing:-0.55px;right:1292.9px;color:#242424;">1.33%</div>
<div class="t" style="top:1563.8px;font-size:22.5px;letter-spacing:-0.35px;right:1083.5px;color:#6e6e6e;">14.18</div>
<div class="t" style="top:1563.8px;font-size:22.5px;letter-spacing:-0.41px;right:886.4px;color:#242424;">3.62</div>
<div class="t" style="top:1563.8px;font-size:22.5px;letter-spacing:-0.35px;right:696.3px;color:#242424;">13.50</div>
<div class="t" style="top:1563.8px;font-size:22.5px;letter-spacing:-0.30px;right:501.5px;color:#242424;">103.55</div>
<div class="t" style="top:1563.8px;font-size:22.5px;letter-spacing:-0.35px;right:294.6px;color:#242424;">15.46</div>
<div class="t" style="top:1563.8px;font-size:22.5px;letter-spacing:-0.55px;right:118.0px;color:#242424;">1.38%</div>
<div class="t" style="top:1610.8px;font-size:22.5px;letter-spacing:-0.26px;left:168.4px;">Soda</div>
<div class="t" style="top:1611.0px;font-size:22.5px;letter-spacing:-0.41px;right:3046.9px;color:#242424;">7.22</div>
<div class="t" style="top:1611.0px;font-size:22.5px;letter-spacing:-0.35px;right:2853.6px;color:#242424;">68.32</div>
<div class="t" style="top:1611.0px;font-size:22.5px;letter-spacing:-0.41px;right:2645.9px;color:#242424;">8.73</div>
<div class="t" style="top:1611.0px;font-size:22.5px;letter-spacing:-0.55px;right:2468.8px;color:#242424;">0.91%</div>
<div class="t" style="top:1611.0px;font-size:22.5px;letter-spacing:-0.41px;right:2259.3px;color:#6e6e6e;">7.20</div>
<div class="t" style="top:1611.0px;font-size:22.5px;letter-spacing:-0.41px;right:2062.3px;color:#242424;">1.83</div>
<div class="t" style="top:1611.0px;font-size:22.5px;letter-spacing:-0.35px;right:1870.8px;color:#242424;">12.05</div>
<div class="t" style="top:1611.0px;font-size:22.5px;letter-spacing:-0.35px;right:1677.7px;color:#242424;">80.81</div>
<div class="t" style="top:1611.0px;font-size:22.5px;letter-spacing:-0.35px;right:1469.9px;color:#242424;">10.29</div>
<div class="t" style="top:1611.0px;font-size:22.5px;letter-spacing:-0.55px;right:1292.9px;color:#242424;">1.30%</div>
<div class="t" style="top:1612.5px;font-size:19.5px;letter-spacing:-0.71px;left:2259.7px;color:#1aab40;">21%</div>
<div class="t" style="top:1611.0px;font-size:22.5px;letter-spacing:-0.01px;right:1083.2px;color:#6e6e6e;">11.99</div>
<div class="t" style="top:1611.0px;font-size:22.5px;letter-spacing:-0.41px;right:886.4px;color:#242424;">3.06</div>
<div class="t" style="top:1611.0px;font-size:22.5px;letter-spacing:-0.01px;right:696.0px;color:#242424;">11.66</div>
<div class="t" style="top:1611.0px;font-size:22.5px;letter-spacing:-0.35px;right:501.5px;color:#242424;">84.34</div>
<div class="t" style="top:1611.0px;font-size:22.5px;letter-spacing:-0.35px;right:294.6px;color:#242424;">12.29</div>
<div class="t" style="top:1611.0px;font-size:22.5px;letter-spacing:-0.55px;right:118.0px;color:#242424;">1.12%</div>
<div class="t" style="top:1658.0px;font-size:22.5px;letter-spacing:0.27px;left:168.4px;">Tea &amp; Coffee</div>
<div class="t" style="top:1658.2px;font-size:22.5px;letter-spacing:-0.41px;right:3046.9px;color:#242424;">1.80</div>
<div class="t" style="top:1658.2px;font-size:22.5px;letter-spacing:-0.35px;right:2853.6px;color:#242424;">18.74</div>
<div class="t" style="top:1658.2px;font-size:22.5px;letter-spacing:-0.41px;right:2645.9px;color:#242424;">2.05</div>
<div class="t" style="top:1658.2px;font-size:22.5px;letter-spacing:-0.55px;right:2468.8px;color:#242424;">0.25%</div>
<div class="t" style="top:1658.2px;font-size:22.5px;letter-spacing:-0.41px;right:2259.3px;color:#6e6e6e;">1.79</div>
<div class="t" style="top:1658.2px;font-size:22.5px;letter-spacing:-0.41px;right:2062.3px;color:#242424;">0.46</div>
<div class="t" style="top:1658.2px;font-size:22.5px;letter-spacing:-0.41px;right:1870.9px;color:#242424;">2.60</div>
<div class="t" style="top:1658.2px;font-size:22.5px;letter-spacing:-0.35px;right:1677.7px;color:#242424;">20.41</div>
<div class="t" style="top:1658.2px;font-size:22.5px;letter-spacing:-0.41px;right:1470.0px;color:#242424;">2.77</div>
<div class="t" style="top:1658.2px;font-size:22.5px;letter-spacing:-0.55px;right:1292.9px;color:#242424;">0.27%</div>
<div class="t" style="top:1658.2px;font-size:22.5px;letter-spacing:-0.41px;right:1083.6px;color:#6e6e6e;">2.60</div>
<div class="t" style="top:1658.2px;font-size:22.5px;letter-spacing:-0.41px;right:886.4px;color:#242424;">0.66</div>
<div class="t" style="top:1658.2px;font-size:22.5px;letter-spacing:-0.41px;right:696.4px;color:#242424;">3.26</div>
<div class="t" style="top:1658.2px;font-size:22.5px;letter-spacing:-0.35px;right:501.5px;color:#242424;">22.51</div>
<div class="t" style="top:1658.2px;font-size:22.5px;letter-spacing:-0.41px;right:294.7px;color:#242424;">3.10</div>
<div class="t" style="top:1658.2px;font-size:22.5px;letter-spacing:-0.55px;right:118.0px;color:#242424;">0.30%</div>
<div class="pm" style="left:132.3px;top:1705.9px"></div>
<div class="t sb" style="top:1704.3px;font-size:23.5px;letter-spacing:0.34px;left:158.9px;">Water</div>
<div class="t sb" style="top:1705.4px;font-size:22.5px;letter-spacing:-0.09px;right:3046.6px;color:#242424;">6.08</div>
<div class="t sb" style="top:1705.4px;font-size:22.5px;letter-spacing:-0.02px;right:2853.3px;color:#242424;">22.21</div>
<div class="t sb" style="top:1705.4px;font-size:22.5px;letter-spacing:-0.09px;right:2645.6px;color:#242424;">7.19</div>
<div class="t sb" style="top:1705.4px;font-size:22.5px;letter-spacing:-0.15px;right:2468.4px;color:#242424;">0.30%</div>
<div class="t sb" style="top:1705.4px;font-size:22.5px;letter-spacing:-0.09px;right:2259.0px;color:#6e6e6e;">6.07</div>
<div class="t sb" style="top:1705.4px;font-size:22.5px;letter-spacing:-0.09px;right:2062.0px;color:#242424;">1.54</div>
<div class="t sb" style="top:1705.4px;font-size:22.5px;letter-spacing:-0.09px;right:1870.6px;color:#242424;">9.46</div>
<div class="t sb" style="top:1705.4px;font-size:22.5px;letter-spacing:-0.02px;right:1677.4px;color:#242424;">28.60</div>
<div class="t sb" style="top:1705.4px;font-size:22.5px;letter-spacing:-0.09px;right:1469.7px;color:#242424;">8.68</div>
<div class="t sb" style="top:1705.4px;font-size:22.5px;letter-spacing:-0.15px;right:1292.5px;color:#242424;">0.38%</div>
<div class="t sb" style="top:1705.4px;font-size:22.5px;letter-spacing:-0.09px;right:1083.3px;color:#6e6e6e;">9.45</div>
<div class="t sb" style="top:1705.4px;font-size:22.5px;letter-spacing:-0.09px;right:886.1px;color:#242424;">2.40</div>
<div class="t sb" style="top:1705.4px;font-size:22.5px;letter-spacing:-0.09px;right:696.1px;color:#242424;">9.00</div>
<div class="t sb" style="top:1705.4px;font-size:22.5px;letter-spacing:0.31px;right:500.9px;color:#242424;">28.11</div>
<div class="t sb" style="top:1705.4px;font-size:22.5px;letter-spacing:-0.09px;right:294.3px;color:#242424;">8.79</div>
<div class="t sb" style="top:1705.4px;font-size:22.5px;letter-spacing:-0.15px;right:117.6px;color:#242424;">0.37%</div>
<div class="a" style="left:1078.4px;top:1124px;width:176.3px;height:47px;background:#e8f5ee;border:1.3px solid #3d8a78"></div>
<div class="t" style="top:1140.4px;font-size:19.5px;letter-spacing:-0.71px;left:1083.8px;color:#1aab40;">19%</div>
<div class="t" style="top:1138.9px;font-size:22.5px;letter-spacing:-0.55px;right:2468.8px;color:#242424;">2.54%</div>
<div class="a" style="left:1254.8px;top:1124px;width:290.3px;height:45.6px;background:#fff;border:3.3px solid #0b72d0"></div>
<svg style="left:1263px;top:1135.7px" width="20" height="22" viewBox="0 0 20 22"><rect x="2.4" y="9.2" width="14" height="11" rx="1.2" fill="none" stroke="#424242" stroke-width="1.4"/><path d="M5.4,9 V6 a4,4 0 0 1 8,0 V9" fill="none" stroke="#424242" stroke-width="1.4"/></svg>
<div class="a" style="left:1290px;top:1145.3px;width:106px;height:2.8px;border-radius:2px;background:#117865"></div>
<div class="a" style="left:1396px;top:1145.3px;width:79.2px;height:2.8px;border-radius:2px;background:#616161"></div>
<div class="a" style="left:1381.8px;top:1132.7px;width:28px;height:28px;border-radius:50%;background:#fff;border:1.8px solid #d0d0d0"></div>
<div class="a" style="left:1386.6px;top:1137.5px;width:18.4px;height:18.4px;border-radius:50%;background:#117865"></div>
<svg style="left:1481px;top:1135.2px" width="24" height="23" viewBox="0 0 24 23"><path d="M15.6,3 a2.8,2.8 0 0 1 4,4 L7.4,19.2 L2.2,20.8 L3.8,15.6 Z M13.6,5 L17.8,9.2" fill="none" stroke="#424242" stroke-width="1.4" stroke-linejoin="round"/></svg>
<svg style="left:1512.6px;top:1135.7px" width="21" height="22" viewBox="0 0 21 22"><g transform="scale(0.86,1)"><path d="M1.6,4.6 H19.2 M7.2,4.4 V3 a1.4,1.4 0 0 1 1.4,-1.4 h3.6 a1.4,1.4 0 0 1 1.4,1.4 V4.4" fill="none" stroke="#424242" stroke-width="1.5" stroke-linecap="round"/><path d="M3.6,4.8 L4.8,19 a1.6,1.6 0 0 0 1.6,1.4 h8 a1.6,1.6 0 0 0 1.6,-1.4 L17.2,4.8 Z" fill="none" stroke="#424242" stroke-width="1.5" stroke-linejoin="round"/><path d="M7.6,8 V17.4 M10.4,8 V17.4 M13.2,8 V17.4" stroke="#424242" stroke-width="1.6" stroke-linecap="round"/></g></svg>
<div class="a" style="left:84px;top:1757px;width:3551px;height:8.5px;background:#fff;border-radius:5px 5px 0 0;box-shadow:0 0 0 1px #f0f0f0"></div>
<div class="a" style="left:84px;top:1757.3px;width:2656px;height:8px;border-radius:5px 5px 0 0;background:linear-gradient(#b4b4b4,#9c9c9c)"></div>
<div class="a" style="left:58px;top:1765.3px;width:3578px;height:43px;background:#f5f5f5"></div>
<div class="a" style="left:224.2px;top:1768px;width:271.3px;height:37.5px;background:#fff"></div>
<div class="a" style="left:224.2px;top:1802.8px;width:271.3px;height:2.8px;background:#117865"></div>
<div class="t sb" style="top:1779.2px;font-size:19.6px;letter-spacing:-1.02px;left:88.0px;">Base</div>
<div class="t sb" style="top:1776.9px;font-size:19.6px;letter-spacing:0.07px;left:247.0px;">Holiday season surge</div>
<svg style="left:507px;top:1776px" width="22" height="22" viewBox="0 0 22 22"><path d="M10.6,0.8 V20.4 M0.8,10.6 H20.4" stroke="#424242" stroke-width="1.5" stroke-linecap="round"/></svg>
<div class="vl" style="left:538px;top:1766px;height:42px;background:#e6e6e6"></div>
<div class="a" style="left:0;top:1808.4px;width:3702.2px;height:53.6px;background:#f5f5f5;border-radius:0 0 14px 12px;box-shadow:0 -1px 2px rgba(0,0,0,.14), 0 0 4px rgba(0,0,0,.24)"></div>
<div class="a" style="left:19.3px;top:1824.3px;width:21.8px;height:21.8px;border-radius:50%;background:#117865"></div>
<svg style="left:19.3px;top:1824.3px" width="22" height="22" viewBox="0 0 22 22"><path d="M6.4,11.4 L9.6,14.6 L15.6,7.8" fill="none" stroke="#fff" stroke-width="1.7" stroke-linecap="round" stroke-linejoin="round"/></svg>
<div class="t" style="top:1826.7px;font-size:19.4px;letter-spacing:-0.34px;left:56.7px;color:#424242;">Session ready</div>
<div class="t" style="top:1826.7px;font-size:19.4px;letter-spacing:-0.33px;left:204.9px;color:#424242;">Rows: 51 Columns: 138</div>
<div class="t" style="top:1826.7px;font-size:19.4px;letter-spacing:-0.86px;left:472.3px;color:#424242;">Sync</div>
<div class="a" style="left:189.3px;top:1826px;width:1.4px;height:18.6px;background:#dadada"></div>
<div class="a" style="left:417.3px;top:1826px;width:1.4px;height:18.6px;background:#dadada"></div>
<div class="a" style="left:525.0999999999999px;top:1826px;width:1.4px;height:18.6px;background:#dadada"></div>
<svg style="left:0;top:0" width="1" height="1"><g fill="none" stroke="#333" stroke-width="1.6" stroke-linecap="round" stroke-linejoin="round"><path d="M440.56,1842.4 A9.2,9.2 0 0 1 447.4,1825.9"/><path d="M451.64,1827.7 A9.2,9.2 0 0 1 444.8,1844.2"/><path d="M444.2,1823.0 L447.5,1825.8 L444.2,1829.6"/><path d="M447.8,1840.5 L444.7,1844.2 L447.8,1847.3"/></g></svg>
<svg style="left:0;top:0" width="1" height="1"><path d="M2990,1827.9 V1843.1 M3003.3,1828.0 L2995.3,1835.5 L3003.3,1843.0" fill="none" stroke="#8a8a8a" stroke-width="1.5" stroke-linecap="round" stroke-linejoin="round"/></svg>
<svg style="left:0;top:0" width="1" height="1"><path d="M3032.4,1828.0 L3024.4,1835.5 L3032.4,1843.0" fill="none" stroke="#8a8a8a" stroke-width="1.5" stroke-linecap="round" stroke-linejoin="round"/></svg>
<div class="a" style="left:3049.2px;top:1819.3px;width:32.4px;height:32.5px;border:1px solid #d6d6d6;border-radius:4px;background:#f7f7f7"></div>
<div class="t" style="top:1826.9px;font-size:19.4px;left:3060.5px;color:#424242;">1</div>
<div class="t" style="top:1826.9px;font-size:19.4px;letter-spacing:0.29px;left:3089.5px;color:#424242;">of 2</div>
<svg style="left:0;top:0" width="1" height="1"><path d="M3140,1828.0 L3148,1835.5 L3140,1843.0" fill="none" stroke="#424242" stroke-width="1.5" stroke-linecap="round" stroke-linejoin="round"/></svg>
<svg style="left:0;top:0" width="1" height="1"><path d="M3169.3,1828.0 L3177.3,1835.5 L3169.3,1843.0 M3182.8,1827.9 V1843.1" fill="none" stroke="#424242" stroke-width="1.5" stroke-linecap="round" stroke-linejoin="round"/></svg>
<div class="a" style="left:3200.2px;top:1826px;width:1.5px;height:18.6px;background:#dadada"></div>
<svg style="left:0;top:0" width="1" height="1"><path d="M3233.5,1835.5 H3249.5" fill="none" stroke="#424242" stroke-width="1.5" stroke-linecap="round" stroke-linejoin="round"/></svg>
<div class="a" style="left:3274px;top:1833.9px;width:107px;height:3.2px;border-radius:2px;background:#117865"></div>
<div class="a" style="left:3381px;top:1833.9px;width:91px;height:3.2px;border-radius:2px;background:#616161"></div>
<div class="a" style="left:3367.5px;top:1822.5px;width:26px;height:26px;border-radius:50%;background:#fff;border:1px solid #d9d9d9"></div>
<div class="a" style="left:3371.7px;top:1826.7px;width:17.6px;height:17.6px;border-radius:50%;background:#117865"></div>
<svg style="left:0;top:0" width="1" height="1"><path d="M3495.8,1834.5 H3513.4 M3504.6,1825.7 V1843.3" fill="none" stroke="#424242" stroke-width="1.6" stroke-linecap="round" stroke-linejoin="round"/></svg>
<div class="a" style="left:3538.5px;top:1821.2px;width:85px;height:28.6px;border:1px solid #d6d6d6;border-bottom:1.5px solid #707070;border-radius:6px;background:#fff"></div>
<div class="t" style="top:1826.6px;font-size:22px;letter-spacing:-0.02px;left:3547.5px;color:#242424;">110</div>
<div class="t" style="top:1828.9px;font-size:19.2px;left:3594.3px;color:#242424;">%</div>
<div class="a" style="left:3644.2px;top:1826px;width:1.5px;height:18.6px;background:#dadada"></div>
<svg style="left:0;top:0" width="1" height="1"><path d="M3669.37,1826.52 L3669.93,1822.96 L3675.07,1822.96 L3675.63,1826.52 L3678.80,1828.35 L3682.16,1827.05 L3684.73,1831.51 L3681.92,1833.77 L3681.92,1837.43 L3684.73,1839.69 L3682.16,1844.15 L3678.80,1842.85 L3675.63,1844.68 L3675.07,1848.24 L3669.93,1848.24 L3669.37,1844.68 L3666.20,1842.85 L3662.84,1844.15 L3660.27,1839.69 L3663.08,1837.43 L3663.08,1833.77 L3660.27,1831.51 L3662.84,1827.05 L3666.20,1828.35 Z" fill="none" stroke="#424242" stroke-width="1.7" stroke-linejoin="round"/><circle cx="3672.5" cy="1835.6" r="4" fill="none" stroke="#424242" stroke-width="1.7"/></svg>
</body></html>
